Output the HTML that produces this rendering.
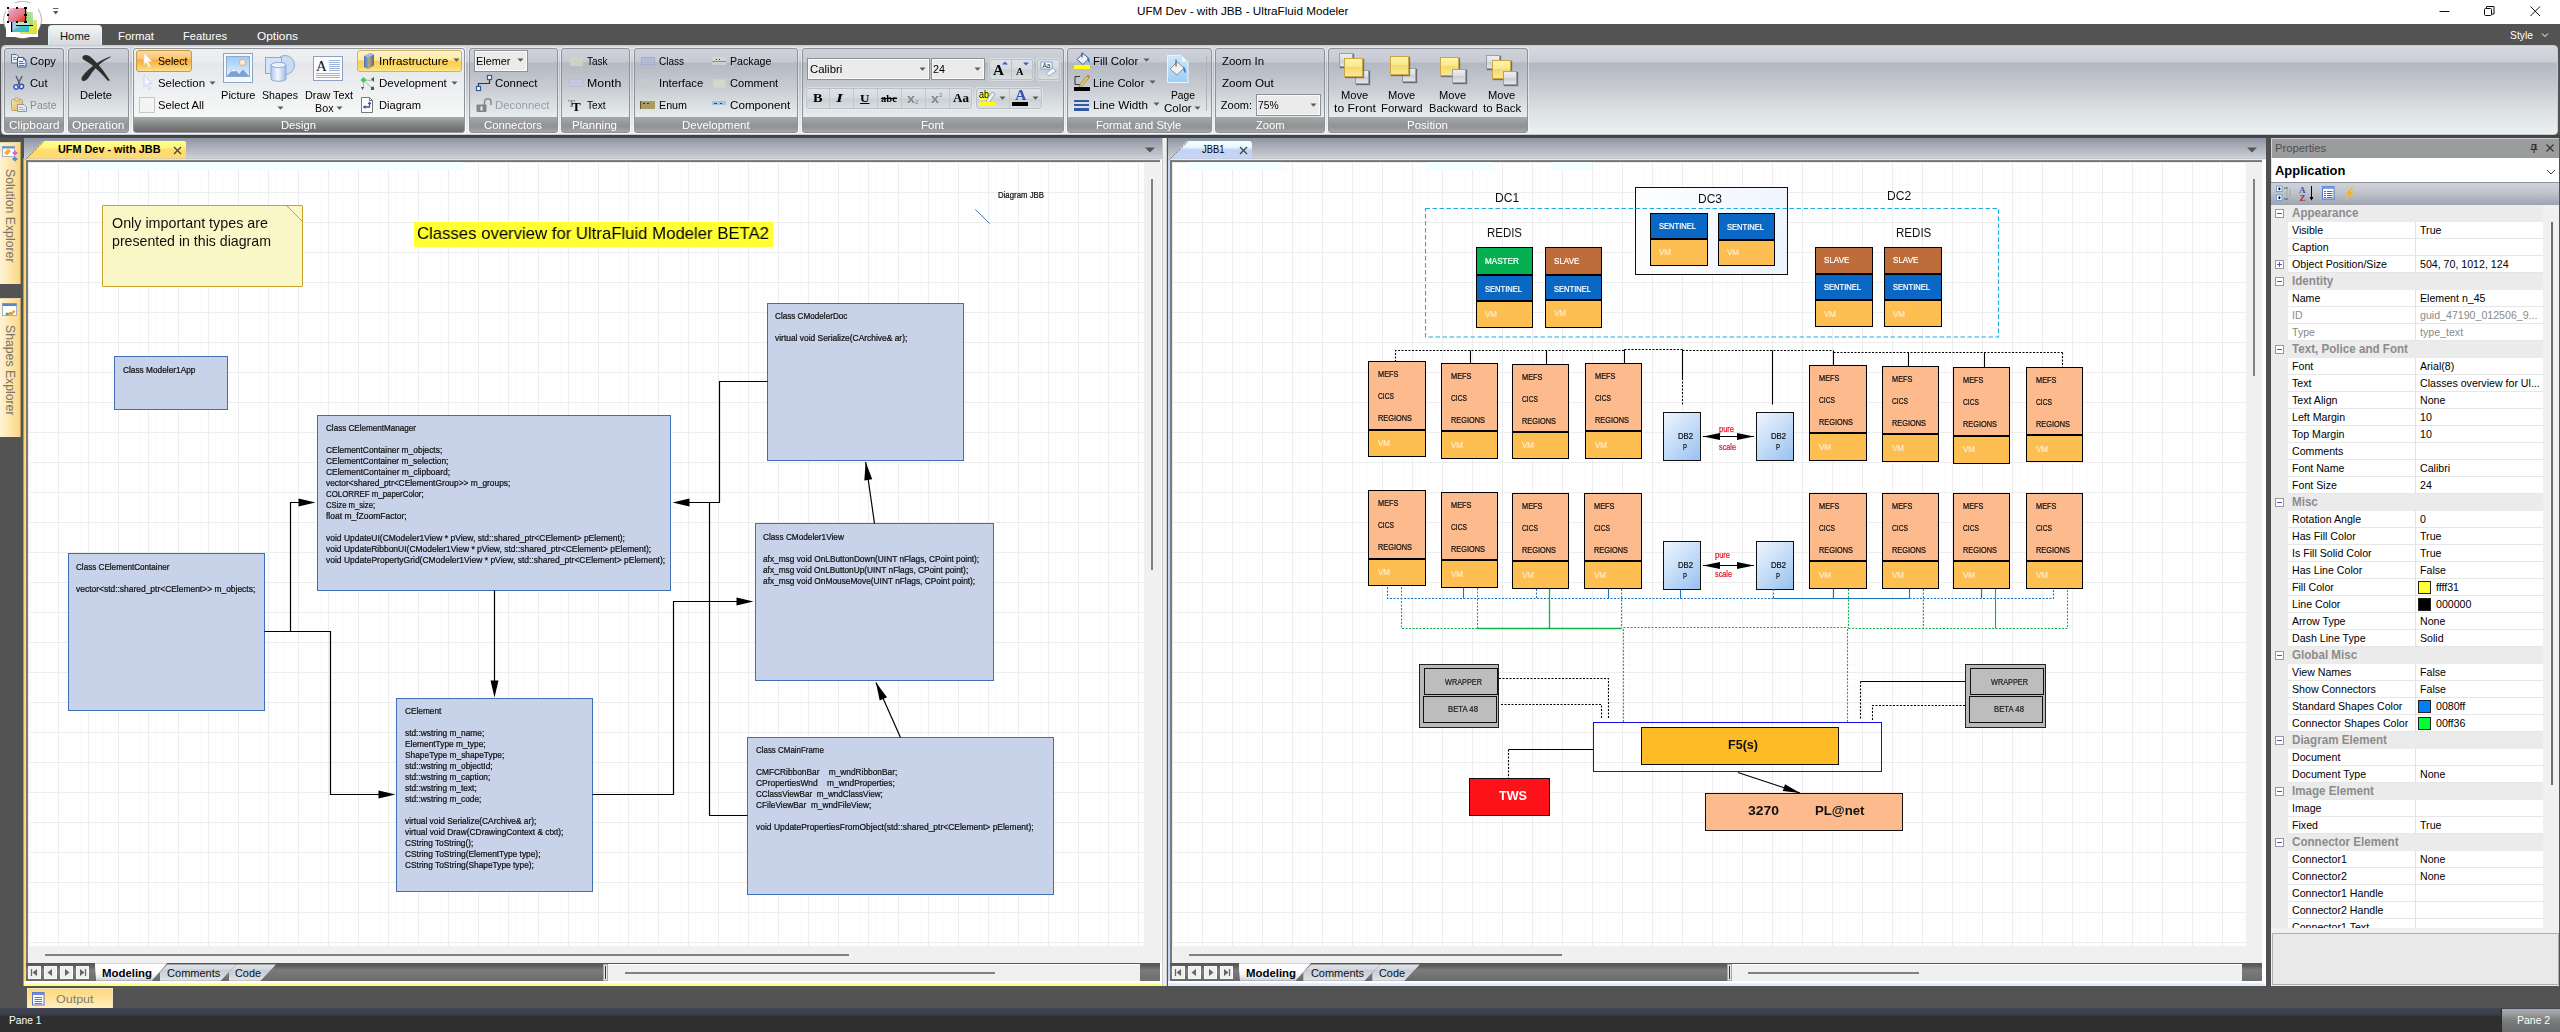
<!DOCTYPE html>
<html lang="en"><head><meta charset="utf-8"><title>UFM Dev - with JBB - UltraFluid Modeler</title>
<style>
html,body{margin:0;padding:0;}
body{width:2560px;height:1032px;overflow:hidden;background:#535353;position:relative;font-family:"Liberation Sans",sans-serif;font-size:12px;color:#000;}
div,span.t,svg{position:absolute;box-sizing:border-box;}
span.t{white-space:pre;line-height:1;transform-origin:0 50%;}
.grp{border:1px solid #90929a;border-radius:3px;background:linear-gradient(#cfd2da 0,#c6cad2 13px,#b3b8c2 14px,#c9cdd3 40px,#e6ecec 67px,#e6ecec 68px,#a6a8a9 68px,#8f9192 77px,#a7a9a9 84px);box-shadow:0 0 0 1px rgba(255,255,255,.45);}
.grph{border:1px solid #90929a;border-radius:3px;background:linear-gradient(#eeeff1 0,#ebecee 13px,#e6e7ea 14px,#eeeff1 40px,#f6f7f7 67px,#f6f7f7 68px,#a9aaaa 68px,#7d7e7e 77px,#696969 84px);box-shadow:0 0 0 1px rgba(255,255,255,.7);}
.gl{color:#fff;}
</style></head>
<body>
<div style="left:0px;top:138px;width:24px;height:848px;background:#535353;"></div>
<div style="left:23px;top:158px;width:0.7px;height:828px;background:#9a9a9a;"></div>
<div style="left:0px;top:142px;width:21px;height:141.5px;background:linear-gradient(to right,#fff3d6 0,#fee9b4 8px,#fcdc90 17px,#f8d277 21px);border-top:1px solid #e9d9a8;border-right:1px solid #b9a060;"></div>
<div style="left:0px;top:298px;width:21px;height:139px;background:linear-gradient(to right,#fff3d6 0,#fee9b4 8px,#fcdc90 17px,#f8d277 21px);border-top:1px solid #e9d9a8;border-right:1px solid #b9a060;"></div>
<svg style="left:2px;top:146px" width="17" height="17" viewBox="0 0 17 17"><rect x=".5" y=".5" width="12" height="10" fill="#fff" stroke="#8aa0c8" stroke-width=".8"/><rect x=".5" y=".5" width="12" height="2" fill="#6a8fd0"/><path d="M2 7l4-4.500 3 2.500-4 4.500z" fill="#f4b030"/><path d="M10 7l3-2.500 3 2.500-3 2.500z" fill="#e060d8"/><path d="M10 13l3-2.500 3 2.500-3 2.500z" fill="#4a90e0"/></svg>
<svg style="left:2px;top:303px" width="17" height="17" viewBox="0 0 17 17"><rect x=".5" y=".5" width="14" height="12" fill="#fff" stroke="#8aa0c8" stroke-width=".8"/><rect x=".5" y=".5" width="14" height="2.500" fill="#5a80c8"/><path d="M4 12l4-3 2 2z" fill="#e05030"/><path d="M7 11l5-4 1.500 1.500-4 4z" fill="#f0a020"/><circle cx="5" cy="11" r="1.500" fill="#50b040"/></svg>
<span class="t" style="left:3.5px;top:169px;writing-mode:vertical-rl;color:#79736b;font-size:13px;line-height:1;white-space:pre;transform:scaleY(0.9445);transform-origin:0 0;">Solution Explorer</span>
<span class="t" style="left:3.5px;top:325px;writing-mode:vertical-rl;color:#79736b;font-size:13px;line-height:1;white-space:pre;transform:scaleY(0.9416);transform-origin:0 0;">Shapes Explorer</span>
<div style="left:23.7px;top:138px;width:1138.6px;height:21px;background:linear-gradient(#8d94a1 0,#a2a7b2 6px,#bfc2ca 16px,#cfd1d6 20px,#b9bbc2 21px);"></div>
<div style="left:23.7px;top:159px;width:1138.6px;height:826.5px;background:#fff;"></div>
<div style="left:23.7px;top:159px;width:1137.1px;height:1px;background:#ffe878;"></div>
<div style="left:23.7px;top:159px;width:2.6px;height:826.5px;background:#ffd970;"></div>
<div style="left:23.7px;top:981px;width:1137.6px;height:4.6px;background:linear-gradient(#ffffff 0,#ffffff 40%,#ffff7a 55%,#ffff8a 100%);"></div>
<div style="left:23.7px;top:985.5px;width:1138.6px;height:0.8px;background:#8a8a8a;"></div>
<div style="left:24.7px;top:140.7px;width:161.8px;height:19.6px;background:linear-gradient(#ffff8c 0,#fff780 6px,#ffdc70 9px,#ffd970 18px);clip-path:polygon(19px 0,calc(100% - 2px) 0,100% 2px,100% 17.8px,0 17.8px,0 100%,1.5px 100%,1.5px 17.8px);"></div>
<svg style="left:24.7px;top:140.7px" width="20" height="19" viewBox="0 0 20 19"><path d="M.5 18.500L19 .5" stroke="#555" stroke-width="1" stroke-dasharray="1.200 1" fill="none"/></svg>
<span class="t" style="left:58.3px;top:144px;font-size:11px;font-weight:bold;transform:scaleX(0.9866);">UFM Dev - with JBB</span>
<svg style="left:173px;top:146px" width="9" height="9" viewBox="0 0 9 9"><path d="M1 1l7 7M8 1l-7 7" stroke="#444" stroke-width="1.300"/></svg>
<svg style="left:1144.8px;top:146.5px" width="10" height="6" viewBox="0 0 10 6"><path d="M0 .5h10L5 5.500z" fill="#555"/></svg>
<div style="left:26.3px;top:160px;width:1134.2px;height:2px;background:linear-gradient(#8c8c8c,#696969);"></div>
<div style="left:26.3px;top:160.2px;width:1.7px;height:821px;background:#7a7a7a;"></div>
<div style="left:28px;top:162px;width:1116px;height:784px;background-color:#fff;background-image:linear-gradient(to right,#ededed 1px,transparent 1px),linear-gradient(to bottom,#ededed 1px,transparent 1px),linear-gradient(to right,#fbfbfb 1px,transparent 1px),linear-gradient(to bottom,#fbfbfb 1px,transparent 1px),linear-gradient(to right,#fbfbfb 1px,transparent 1px),linear-gradient(to bottom,#fbfbfb 1px,transparent 1px),linear-gradient(to right,#fbfbfb 1px,transparent 1px),linear-gradient(to bottom,#fbfbfb 1px,transparent 1px);background-size:30px 30px;background-position:0 0,0 0,7px 0,0 7px,15px 0,0 15px,22px 0,0 22px;"></div>
<div style="left:1144px;top:162px;width:16.5px;height:801px;background:#f0f0f0;"></div>
<div style="left:28px;top:946px;width:1117px;height:17.2px;background:#f0f0f0;"></div>
<div style="left:26.3px;top:963.2px;width:1134.2px;height:17.8px;background:linear-gradient(#555 0,#5e5e5e 3px,#7b7b7b 7px,#747474 12px,#6a6a6a 18px);"></div>
<div style="left:28.2px;top:966px;width:13px;height:13px;background:#efefef;border:1px solid #f8f8f8;"></div>
<svg style="left:28.2px;top:966px" width="13" height="13" viewBox="0 0 13 13"><path d="M3.500 3v7" stroke="#666" stroke-width="1.200"/><path d="M9 3v7L4.500 6.500z" fill="#666"/></svg>
<div style="left:44.2px;top:966px;width:13px;height:13px;background:#efefef;border:1px solid #f8f8f8;"></div>
<svg style="left:44.2px;top:966px" width="13" height="13" viewBox="0 0 13 13"><path d="M8 3v7L3.500 6.500z" fill="#666"/></svg>
<div style="left:60.2px;top:966px;width:13px;height:13px;background:#efefef;border:1px solid #f8f8f8;"></div>
<svg style="left:60.2px;top:966px" width="13" height="13" viewBox="0 0 13 13"><path d="M5 3v7l4.500-3.500z" fill="#666"/></svg>
<div style="left:76.2px;top:966px;width:13px;height:13px;background:#efefef;border:1px solid #f8f8f8;"></div>
<svg style="left:76.2px;top:966px" width="13" height="13" viewBox="0 0 13 13"><path d="M9.500 3v7" stroke="#666" stroke-width="1.200"/><path d="M4 3v7l4.500-3.500z" fill="#666"/></svg>
<div style="left:94.7px;top:963.2px;width:72.6px;height:17.5px;background:linear-gradient(#fff 0,#fdfdfd 10px,#e6e9ee 14px,#c9d0da 17.5px);clip-path:polygon(0 0,100% 0,calc(100% - 15.5px) 100%,1.5px 100%);"></div>
<div style="left:159.5px;top:963.2px;width:76.7px;height:17.5px;background:linear-gradient(#e4e8ee 0,#d6dbe3 6px,#c9ced6 7px,#d0d5dc 12px,#e0e4e9 17px);clip-path:polygon(7.8px 1.2px,100% 1.2px,calc(100% - 15.5px) 100%,0 100%,0 9.5px);"></div>
<div style="left:228.5px;top:963.2px;width:47.5px;height:17.5px;background:linear-gradient(#e4e8ee 0,#d6dbe3 6px,#c9ced6 7px,#d0d5dc 12px,#e0e4e9 17px);clip-path:polygon(7.8px 1.2px,100% 1.2px,calc(100% - 15.5px) 100%,0 100%,0 9.5px);"></div>
<span class="t" style="left:102.49px;top:968px;font-size:11px;font-weight:bold;transform:scaleX(1.0358);">Modeling</span>
<span class="t" style="left:167.1px;top:968px;font-size:11px;color:#111;">Comments</span>
<span class="t" style="left:235.1px;top:968px;font-size:11px;color:#111;transform:scaleX(0.9887);">Code</span>
<div style="left:1162.3px;top:138px;width:5.2px;height:848px;background:linear-gradient(to right,#a8a8a8 0,#ececec 1px,#efefef 4px,#a0a0a0 5.200px);"></div>
<div style="left:1167.5px;top:138px;width:1098.8px;height:21px;background:linear-gradient(#8d94a1 0,#a2a7b2 6px,#bfc2ca 16px,#cfd1d6 20px,#b9bbc2 21px);"></div>
<div style="left:1167.5px;top:159px;width:1098.8px;height:826.5px;background:#fff;"></div>
<div style="left:1167.5px;top:159px;width:1097.3px;height:1px;background:#e3ecfd;"></div>
<div style="left:1167.5px;top:159px;width:2.6px;height:826.5px;background:#c5d6f6;"></div>
<div style="left:1167.5px;top:981px;width:1097.8px;height:4.6px;background:linear-gradient(#ffffff 0,#ffffff 40%,#dbe6fc 55%,#e6eefe 100%);"></div>
<div style="left:1167.5px;top:985.5px;width:1098.8px;height:0.8px;background:#8a8a8a;"></div>
<div style="left:1168.5px;top:140.7px;width:83.5px;height:19.6px;background:linear-gradient(#f2ffff 0,#eaf8ff 6px,#c2d2f2 9px,#c5d6f6 18px);clip-path:polygon(19px 0,calc(100% - 2px) 0,100% 2px,100% 17.8px,0 17.8px,0 100%,1.5px 100%,1.5px 17.8px);"></div>
<svg style="left:1168.5px;top:140.7px" width="20" height="19" viewBox="0 0 20 19"><path d="M.5 18.500L19 .5" stroke="#555" stroke-width="1" stroke-dasharray="1.200 1" fill="none"/></svg>
<span class="t" style="left:1202.13px;top:144px;font-size:11px;transform:scaleX(0.8558);">JBB1</span>
<svg style="left:1238.5px;top:146px" width="9" height="9" viewBox="0 0 9 9"><path d="M1 1l7 7M8 1l-7 7" stroke="#444" stroke-width="1.300"/></svg>
<svg style="left:2246.6px;top:146.5px" width="10" height="6" viewBox="0 0 10 6"><path d="M0 .5h10L5 5.500z" fill="#555"/></svg>
<div style="left:1170.1px;top:160px;width:1092.2px;height:2px;background:linear-gradient(#8c8c8c,#696969);"></div>
<div style="left:1170.1px;top:160.2px;width:1.7px;height:821px;background:#7a7a7a;"></div>
<div style="left:1171.8px;top:162px;width:1074px;height:784px;background-color:#fff;background-image:linear-gradient(to right,#ededed 1px,transparent 1px),linear-gradient(to bottom,#ededed 1px,transparent 1px),linear-gradient(to right,#fbfbfb 1px,transparent 1px),linear-gradient(to bottom,#fbfbfb 1px,transparent 1px),linear-gradient(to right,#fbfbfb 1px,transparent 1px),linear-gradient(to bottom,#fbfbfb 1px,transparent 1px),linear-gradient(to right,#fbfbfb 1px,transparent 1px),linear-gradient(to bottom,#fbfbfb 1px,transparent 1px);background-size:30px 30px;background-position:0 0,0 0,7px 0,0 7px,15px 0,0 15px,22px 0,0 22px;"></div>
<div style="left:2245.8px;top:162px;width:16.5px;height:801px;background:#f0f0f0;"></div>
<div style="left:1171.8px;top:946px;width:1075px;height:17.2px;background:#f0f0f0;"></div>
<div style="left:1170.1px;top:963.2px;width:1092.2px;height:17.8px;background:linear-gradient(#555 0,#5e5e5e 3px,#7b7b7b 7px,#747474 12px,#6a6a6a 18px);"></div>
<div style="left:1172px;top:966px;width:13px;height:13px;background:#efefef;border:1px solid #f8f8f8;"></div>
<svg style="left:1172px;top:966px" width="13" height="13" viewBox="0 0 13 13"><path d="M3.500 3v7" stroke="#666" stroke-width="1.200"/><path d="M9 3v7L4.500 6.500z" fill="#666"/></svg>
<div style="left:1188px;top:966px;width:13px;height:13px;background:#efefef;border:1px solid #f8f8f8;"></div>
<svg style="left:1188px;top:966px" width="13" height="13" viewBox="0 0 13 13"><path d="M8 3v7L3.500 6.500z" fill="#666"/></svg>
<div style="left:1204px;top:966px;width:13px;height:13px;background:#efefef;border:1px solid #f8f8f8;"></div>
<svg style="left:1204px;top:966px" width="13" height="13" viewBox="0 0 13 13"><path d="M5 3v7l4.500-3.500z" fill="#666"/></svg>
<div style="left:1220px;top:966px;width:13px;height:13px;background:#efefef;border:1px solid #f8f8f8;"></div>
<svg style="left:1220px;top:966px" width="13" height="13" viewBox="0 0 13 13"><path d="M9.500 3v7" stroke="#666" stroke-width="1.200"/><path d="M4 3v7l4.500-3.500z" fill="#666"/></svg>
<div style="left:1238.5px;top:963.2px;width:72.6px;height:17.5px;background:linear-gradient(#fff 0,#fdfdfd 10px,#e6e9ee 14px,#c9d0da 17.5px);clip-path:polygon(0 0,100% 0,calc(100% - 15.5px) 100%,1.5px 100%);"></div>
<div style="left:1303.3px;top:963.2px;width:76.7px;height:17.5px;background:linear-gradient(#e4e8ee 0,#d6dbe3 6px,#c9ced6 7px,#d0d5dc 12px,#e0e4e9 17px);clip-path:polygon(7.8px 1.2px,100% 1.2px,calc(100% - 15.5px) 100%,0 100%,0 9.5px);"></div>
<div style="left:1372.3px;top:963.2px;width:47.5px;height:17.5px;background:linear-gradient(#e4e8ee 0,#d6dbe3 6px,#c9ced6 7px,#d0d5dc 12px,#e0e4e9 17px);clip-path:polygon(7.8px 1.2px,100% 1.2px,calc(100% - 15.5px) 100%,0 100%,0 9.5px);"></div>
<span class="t" style="left:1246.29px;top:968px;font-size:11px;font-weight:bold;transform:scaleX(1.0358);">Modeling</span>
<span class="t" style="left:1310.9px;top:968px;font-size:11px;color:#111;">Comments</span>
<span class="t" style="left:1378.9px;top:968px;font-size:11px;color:#111;transform:scaleX(0.9887);">Code</span>
<div style="left:2266.3px;top:138px;width:4.7px;height:848px;background:#505050;"></div>
<div style="left:1151px;top:179px;width:2px;height:391px;background:#808080;"></div>
<div style="left:45px;top:954px;width:804px;height:2px;background:#808080;"></div>
<div style="left:603px;top:963.8px;width:4.8px;height:17.2px;background:#e8e8e8;border:1px solid #a9a9a9;"></div>
<div style="left:604.5px;top:966px;width:1px;height:13px;background:#333;"></div>
<div style="left:607.8px;top:963.6px;width:532.5px;height:17.4px;background:#f0f0f0;border-top:1px solid #fff;"></div>
<div style="left:625px;top:972px;width:370px;height:2px;background:#808080;"></div>
<div style="left:1140.3px;top:963.3px;width:19.8px;height:17.7px;background:linear-gradient(#555 0,#5e5e5e 3px,#7b7b7b 7px,#747474 12px,#6e6e6e 18px);"></div>
<div style="left:2253px;top:179px;width:2px;height:197px;background:#808080;"></div>
<div style="left:1189px;top:954px;width:373px;height:2px;background:#808080;"></div>
<div style="left:1727px;top:963.8px;width:4.8px;height:17.2px;background:#e8e8e8;border:1px solid #a9a9a9;"></div>
<div style="left:1728.5px;top:966px;width:1px;height:13px;background:#333;"></div>
<div style="left:1731.8px;top:963.6px;width:510.5px;height:17.4px;background:#f0f0f0;border-top:1px solid #fff;"></div>
<div style="left:1748px;top:972px;width:171px;height:2px;background:#808080;"></div>
<div style="left:2242.2px;top:963.3px;width:19.8px;height:17.7px;background:linear-gradient(#555 0,#5e5e5e 3px,#7b7b7b 7px,#747474 12px,#6e6e6e 18px);"></div>
<div style="left:81px;top:162px;width:381px;height:7.5px;background:#f0ffff;"></div>
<div style="left:1189px;top:162px;width:93px;height:7.5px;background:#f0ffff;"></div>
<div style="left:1427px;top:162px;width:66px;height:7.5px;background:#f0ffff;"></div>
<div style="left:1553px;top:162px;width:39px;height:7.5px;background:#f0ffff;"></div>
<div style="left:0px;top:986px;width:2560px;height:22px;background:#535353;"></div>
<div style="left:27px;top:988px;width:86px;height:20px;background:linear-gradient(#ffd67a 0,#ffe49c 10px,#fff0c4 20px);border:1px solid #f0e4c0;border-bottom:none;"></div>
<svg style="left:32px;top:992px" width="13" height="14" viewBox="0 0 13 14"><rect x=".5" y=".5" width="11.500" height="12.500" fill="#fff" stroke="#5a6fc8"/><rect x=".5" y=".5" width="11.500" height="2.500" fill="#6a8ae0"/><path d="M2.500 5.500h7.500M2.500 7.500h7.500M2.500 9.500h7.500M2.500 11.500h7.500" stroke="#777" stroke-width="1"/></svg>
<span class="t" style="left:56.27px;top:994px;font-size:11px;color:#7d7d7d;transform:scaleX(1.1356);">Output</span>
<div style="left:0px;top:1008px;width:2560px;height:24px;background:linear-gradient(#424554 0,#3b3f4b 6px,#333437 8px,#2f2f2f 9px,#2f2f2f 100%);"></div>
<span class="t" style="left:9.31px;top:1015px;font-size:11px;color:#fff;transform:scaleX(0.9322);">Pane 1</span>
<div style="left:2500.5px;top:1008.7px;width:59.5px;height:23.3px;background:linear-gradient(#a8aaab 0,#9a9c9d 5px,#7c7e80 11px,#727476 16px,#6a6c6e 23px);border-left:1px solid #2a2a2a;"></div>
<span class="t" style="left:2517.11px;top:1015px;font-size:11px;color:#fff;transform:scaleX(0.9523);">Pane 2</span>
<div style="left:0;top:0;width:2270px;height:1032px;will-change:transform;">
<div style="left:102px;top:205px;width:201px;height:82px;background:#fbf6c6;border:1px solid #c9a22e;border-radius:1px;"></div>
<svg style="left:286px;top:205px" width="17" height="17" viewBox="0 0 17 17"><path d="M.5 .5L16.500 16.500" stroke="#c9a22e" stroke-width="1" fill="none"/></svg>
<span class="t" style="left:111.8px;top:216px;font-size:14.5px;color:#111;transform:scaleX(0.9876);">Only important types are</span>
<span class="t" style="left:111.8px;top:234px;font-size:14.5px;color:#111;transform:scaleX(0.9766);">presented in this diagram</span>
<div style="left:414px;top:222px;width:359px;height:25px;background:#ffff31;"></div>
<span class="t" style="left:416.5px;top:225px;font-size:17px;color:#000;transform:scaleX(0.9839);">Classes overview for UltraFluid Modeler BETA2</span>
<span class="t" style="left:998px;top:192px;font-size:8.2px;color:#111;transform:scaleX(0.9523);-webkit-text-stroke:0.22px #111;">Diagram JBB</span>
<div style="left:114px;top:356px;width:114px;height:54px;background:#c8d2e9;border:1px solid #3f6fb5;"></div>
<span class="t" style="left:123.1px;top:367px;font-size:8.2px;color:#111;transform:scaleX(1.0132);-webkit-text-stroke:0.22px #111;">Class Modeler1App</span>
<div style="left:317px;top:415px;width:354px;height:176px;background:#c8d2e9;border:1px solid #3f6fb5;"></div>
<span class="t" style="left:326.4px;top:425px;font-size:8.2px;color:#111;transform:scaleX(0.9885);-webkit-text-stroke:0.22px #111;">Class CElementManager</span>
<span class="t" style="left:326.4px;top:447px;font-size:8.2px;color:#111;transform:scaleX(1.0257);-webkit-text-stroke:0.22px #111;">CElementContainer m_objects;</span>
<span class="t" style="left:326.4px;top:458px;font-size:8.2px;color:#111;transform:scaleX(1.0228);-webkit-text-stroke:0.22px #111;">CElementContainer m_selection;</span>
<span class="t" style="left:326.4px;top:469px;font-size:8.2px;color:#111;transform:scaleX(1.0283);-webkit-text-stroke:0.22px #111;">CElementContainer m_clipboard;</span>
<span class="t" style="left:326.4px;top:480px;font-size:8.2px;color:#111;transform:scaleX(1.0227);-webkit-text-stroke:0.22px #111;">vector&lt;shared_ptr&lt;CElementGroup&gt;&gt; m_groups;</span>
<span class="t" style="left:326.4px;top:491px;font-size:8.2px;color:#111;transform:scaleX(0.9581);-webkit-text-stroke:0.22px #111;">COLORREF m_paperColor;</span>
<span class="t" style="left:326.4px;top:502px;font-size:8.2px;color:#111;transform:scaleX(0.9370);-webkit-text-stroke:0.22px #111;">CSize m_size;</span>
<span class="t" style="left:326.4px;top:513px;font-size:8.2px;color:#111;transform:scaleX(1.0369);-webkit-text-stroke:0.22px #111;">float m_fZoomFactor;</span>
<span class="t" style="left:326.4px;top:535px;font-size:8.2px;color:#111;transform:scaleX(1.0372);-webkit-text-stroke:0.22px #111;">void UpdateUI(CModeler1View * pView, std::shared_ptr&lt;CElement&gt; pElement);</span>
<span class="t" style="left:326.4px;top:546px;font-size:8.2px;color:#111;transform:scaleX(1.0351);-webkit-text-stroke:0.22px #111;">void UpdateRibbonUI(CModeler1View * pView, std::shared_ptr&lt;CElement&gt; pElement);</span>
<span class="t" style="left:326.4px;top:557px;font-size:8.2px;color:#111;transform:scaleX(1.0390);-webkit-text-stroke:0.22px #111;">void UpdatePropertyGrid(CModeler1View * pView, std::shared_ptr&lt;CElement&gt; pElement);</span>
<div style="left:68px;top:553px;width:197px;height:158px;background:#c8d2e9;border:1px solid #3f6fb5;"></div>
<span class="t" style="left:76.4px;top:564px;font-size:8.2px;color:#111;transform:scaleX(0.9911);-webkit-text-stroke:0.22px #111;">Class CElementContainer</span>
<span class="t" style="left:76.4px;top:586px;font-size:8.2px;color:#111;transform:scaleX(1.0309);-webkit-text-stroke:0.22px #111;">vector&lt;std::shared_ptr&lt;CElement&gt;&gt; m_objects;</span>
<div style="left:396px;top:698px;width:197px;height:194px;background:#c8d2e9;border:1px solid #3f6fb5;"></div>
<span class="t" style="left:405.1px;top:708px;font-size:8.2px;color:#111;transform:scaleX(1.0105);-webkit-text-stroke:0.22px #111;">CElement</span>
<span class="t" style="left:405.1px;top:730px;font-size:8.2px;color:#111;transform:scaleX(1.0180);-webkit-text-stroke:0.22px #111;">std::wstring m_name;</span>
<span class="t" style="left:405.1px;top:741px;font-size:8.2px;color:#111;transform:scaleX(1.0181);-webkit-text-stroke:0.22px #111;">ElementType m_type;</span>
<span class="t" style="left:405.1px;top:752px;font-size:8.2px;color:#111;transform:scaleX(1.0193);-webkit-text-stroke:0.22px #111;">ShapeType m_shapeType;</span>
<span class="t" style="left:405.1px;top:763px;font-size:8.2px;color:#111;transform:scaleX(1.0186);-webkit-text-stroke:0.22px #111;">std::wstring m_objectId;</span>
<span class="t" style="left:405.1px;top:774px;font-size:8.2px;color:#111;transform:scaleX(1.0184);-webkit-text-stroke:0.22px #111;">std::wstring m_caption;</span>
<span class="t" style="left:405.1px;top:785px;font-size:8.2px;color:#111;transform:scaleX(1.0173);-webkit-text-stroke:0.22px #111;">std::wstring m_text;</span>
<span class="t" style="left:405.1px;top:796px;font-size:8.2px;color:#111;transform:scaleX(1.0177);-webkit-text-stroke:0.22px #111;">std::wstring m_code;</span>
<span class="t" style="left:405.1px;top:818px;font-size:8.2px;color:#111;transform:scaleX(1.0205);-webkit-text-stroke:0.22px #111;">virtual void Serialize(CArchive&amp; ar);</span>
<span class="t" style="left:405.1px;top:829px;font-size:8.2px;color:#111;transform:scaleX(1.0212);-webkit-text-stroke:0.22px #111;">virtual void Draw(CDrawingContext &amp; ctxt);</span>
<span class="t" style="left:405.1px;top:840px;font-size:8.2px;color:#111;transform:scaleX(1.0170);-webkit-text-stroke:0.22px #111;">CString ToString();</span>
<span class="t" style="left:405.1px;top:851px;font-size:8.2px;color:#111;transform:scaleX(1.0206);-webkit-text-stroke:0.22px #111;">CString ToString(ElementType type);</span>
<span class="t" style="left:405.1px;top:862px;font-size:8.2px;color:#111;transform:scaleX(1.0204);-webkit-text-stroke:0.22px #111;">CString ToString(ShapeType type);</span>
<div style="left:767px;top:303px;width:197px;height:158px;background:#c8d2e9;border:1px solid #3f6fb5;"></div>
<span class="t" style="left:775.3px;top:313px;font-size:8.2px;color:#111;transform:scaleX(0.9944);-webkit-text-stroke:0.22px #111;">Class CModelerDoc</span>
<span class="t" style="left:775.3px;top:335px;font-size:8.2px;color:#111;transform:scaleX(1.0274);-webkit-text-stroke:0.22px #111;">virtual void Serialize(CArchive&amp; ar);</span>
<div style="left:755px;top:523px;width:239px;height:158px;background:#c8d2e9;border:1px solid #3f6fb5;"></div>
<span class="t" style="left:763.4px;top:534px;font-size:8.2px;color:#111;transform:scaleX(1.0060);-webkit-text-stroke:0.22px #111;">Class CModeler1View</span>
<span class="t" style="left:763.4px;top:556px;font-size:8.2px;color:#111;transform:scaleX(1.0136);-webkit-text-stroke:0.22px #111;">afx_msg void OnLButtonDown(UINT nFlags, CPoint point);</span>
<span class="t" style="left:763.4px;top:567px;font-size:8.2px;color:#111;transform:scaleX(1.0117);-webkit-text-stroke:0.22px #111;">afx_msg void OnLButtonUp(UINT nFlags, CPoint point);</span>
<span class="t" style="left:763.4px;top:578px;font-size:8.2px;color:#111;transform:scaleX(1.0166);-webkit-text-stroke:0.22px #111;">afx_msg void OnMouseMove(UINT nFlags, CPoint point);</span>
<div style="left:747px;top:737px;width:307px;height:158px;background:#c8d2e9;border:1px solid #3f6fb5;"></div>
<span class="t" style="left:756.1px;top:747px;font-size:8.2px;color:#111;transform:scaleX(0.9691);-webkit-text-stroke:0.22px #111;">Class CMainFrame</span>
<span class="t" style="left:756.1px;top:769px;font-size:8.2px;color:#111;transform:scaleX(1.0180);-webkit-text-stroke:0.22px #111;">CMFCRibbonBar    m_wndRibbonBar;</span>
<span class="t" style="left:756.1px;top:780px;font-size:8.2px;color:#111;transform:scaleX(1.0269);-webkit-text-stroke:0.22px #111;">CPropertiesWnd    m_wndProperties;</span>
<span class="t" style="left:756.1px;top:791px;font-size:8.2px;color:#111;transform:scaleX(0.9906);-webkit-text-stroke:0.22px #111;">CClassViewBar  m_wndClassView;</span>
<span class="t" style="left:756.1px;top:802px;font-size:8.2px;color:#111;transform:scaleX(1.0165);-webkit-text-stroke:0.22px #111;">CFileViewBar  m_wndFileView;</span>
<span class="t" style="left:756.1px;top:824px;font-size:8.2px;color:#111;transform:scaleX(1.0338);-webkit-text-stroke:0.22px #111;">void UpdatePropertiesFromObject(std::shared_ptr&lt;CElement&gt; pElement);</span>
<svg style="left:28px;top:162px" width="1116" height="783" viewBox="0 0 1116 783"><polyline points="236.5,469.5 302.5,469.5 302.5,632.5 352.0,632.5" fill="none" stroke="#000" stroke-width="1.200" /><polygon points="367.5,632.5 350.5,636.5 350.5,628.5" fill="#000"/><polyline points="262.5,469.5 262.5,340.5 272.0,340.5" fill="none" stroke="#000" stroke-width="1.200" /><polygon points="287.5,340.5 270.5,344.5 270.5,336.5" fill="#000"/><polyline points="466.5,428.5 466.5,520.0" fill="none" stroke="#000" stroke-width="1.200" /><polygon points="466.5,535.5 462.5,518.5 470.5,518.5" fill="#000"/><polyline points="564.5,632.5 645.5,632.5 645.5,439.5 710.0,439.5" fill="none" stroke="#000" stroke-width="1.200" /><polygon points="725.5,439.5 708.5,443.5 708.5,435.5" fill="#000"/><polyline points="739.5,219.5 691.5,219.5 691.5,340.5 660.0,340.5" fill="none" stroke="#000" stroke-width="1.200" /><polygon points="644.5,340.5 661.5,336.5 661.5,344.5" fill="#000"/><polyline points="719.5,653.5 681.5,653.5 681.5,340.5" fill="none" stroke="#000" stroke-width="1.200" /><polyline points="846.5,361.5 837.7,300.0" fill="none" stroke="#000" stroke-width="1.200" /><polygon points="837.7,300.0 844.2,317.3 836.3,318.4" fill="#000"/><polyline points="872.5,575.5 848.0,520.5" fill="none" stroke="#000" stroke-width="1.200" /><polygon points="848.0,520.5 859.0,535.3 851.7,538.6" fill="#000"/><path d="M947.2 47.400000000000006L961.8 61.599999999999994" stroke="#4a7ab5" stroke-width="1"/></svg>
<div style="left:1635px;top:187px;width:153px;height:88px;background:linear-gradient(100deg,#fdfeff 0,#f4f8fe 60%,#eef4fd 100%);border:1px solid #111;"></div>
<svg style="left:1172px;top:162px" width="1075" height="783" viewBox="0 0 1075 783"><rect x="253.5" y="46.5" width="573" height="128.500" fill="none" stroke="#1cade4" stroke-width="1.100" stroke-dasharray="4.500 2.500"/></svg>
<span class="t" style="left:1495px;top:192px;font-size:12.5px;color:#111;transform:scaleX(0.9678);">DC1</span>
<span class="t" style="left:1887.1px;top:190px;font-size:12.5px;color:#111;transform:scaleX(0.9678);">DC2</span>
<span class="t" style="left:1487.3px;top:227px;font-size:12.5px;color:#111;transform:scaleX(0.9162);">REDIS</span>
<span class="t" style="left:1895.5px;top:227px;font-size:12.5px;color:#111;transform:scaleX(0.9240);">REDIS</span>
<div style="left:1476px;top:247px;width:57px;height:29px;background:#05b050;border:1.3px solid #000;"></div>
<div style="left:1476px;top:274px;width:57px;height:28px;background:#0a68c4;border:1.3px solid #000;border-top-width:2px;"></div>
<div style="left:1476px;top:300px;width:57px;height:28px;background:#fdbf52;border:1.3px solid #000;border-top-width:2px;"></div>
<span class="t" style="left:1485px;top:258px;font-size:8.2px;color:#fff;transform:scaleX(0.9902);-webkit-text-stroke:0.22px #fff;">MASTER</span>
<span class="t" style="left:1485px;top:286px;font-size:8.2px;color:#fff;transform:scaleX(0.9227);-webkit-text-stroke:0.22px #fff;">SENTINEL</span>
<span class="t" style="left:1485px;top:311px;font-size:8.2px;color:#fde9c8;transform:scaleX(0.9756);-webkit-text-stroke:0.22px #fde9c8;">VM</span>
<div style="left:1545px;top:247px;width:57px;height:29px;background:#bd6d3a;border:1.3px solid #000;"></div>
<div style="left:1545px;top:274px;width:57px;height:27px;background:#0a68c4;border:1.3px solid #000;border-top-width:2px;"></div>
<div style="left:1545px;top:299px;width:57px;height:29px;background:#fdbf52;border:1.3px solid #000;border-top-width:2px;"></div>
<span class="t" style="left:1554px;top:258px;font-size:8.2px;color:#fff;transform:scaleX(0.9855);-webkit-text-stroke:0.22px #fff;">SLAVE</span>
<span class="t" style="left:1554px;top:286px;font-size:8.2px;color:#fff;transform:scaleX(0.9227);-webkit-text-stroke:0.22px #fff;">SENTINEL</span>
<span class="t" style="left:1554px;top:310px;font-size:8.2px;color:#fde9c8;transform:scaleX(0.9756);-webkit-text-stroke:0.22px #fde9c8;">VM</span>
<span class="t" style="left:1697.5px;top:193px;font-size:12.5px;color:#111;transform:scaleX(0.9598);">DC3</span>
<div style="left:1650px;top:212.5px;width:58px;height:27px;background:#0a68c4;border:1.3px solid #000;"></div>
<div style="left:1650px;top:237.5px;width:58px;height:28.5px;background:#fdbf52;border:1.3px solid #000;border-top-width:2px;"></div>
<span class="t" style="left:1659px;top:223px;font-size:8.2px;color:#fff;transform:scaleX(0.9227);-webkit-text-stroke:0.22px #fff;">SENTINEL</span>
<span class="t" style="left:1659px;top:249px;font-size:8.2px;color:#fde9c8;transform:scaleX(0.9756);-webkit-text-stroke:0.22px #fde9c8;">VM</span>
<div style="left:1718px;top:213px;width:57px;height:27.5px;background:#0a68c4;border:1.3px solid #000;"></div>
<div style="left:1718px;top:238.5px;width:57px;height:27.5px;background:#fdbf52;border:1.3px solid #000;border-top-width:2px;"></div>
<span class="t" style="left:1727px;top:224px;font-size:8.2px;color:#fff;transform:scaleX(0.9227);-webkit-text-stroke:0.22px #fff;">SENTINEL</span>
<span class="t" style="left:1727px;top:249px;font-size:8.2px;color:#fde9c8;transform:scaleX(0.9756);-webkit-text-stroke:0.22px #fde9c8;">VM</span>
<div style="left:1815px;top:247px;width:58px;height:28px;background:#bd6d3a;border:1.3px solid #000;"></div>
<div style="left:1815px;top:273px;width:58px;height:28px;background:#0a68c4;border:1.3px solid #000;border-top-width:2px;"></div>
<div style="left:1815px;top:299px;width:58px;height:28px;background:#fdbf52;border:1.3px solid #000;border-top-width:2px;"></div>
<span class="t" style="left:1824px;top:257px;font-size:8.2px;color:#fff;transform:scaleX(0.9855);-webkit-text-stroke:0.22px #fff;">SLAVE</span>
<span class="t" style="left:1824px;top:284px;font-size:8.2px;color:#fff;transform:scaleX(0.9227);-webkit-text-stroke:0.22px #fff;">SENTINEL</span>
<span class="t" style="left:1824px;top:311px;font-size:8.2px;color:#fde9c8;transform:scaleX(0.9756);-webkit-text-stroke:0.22px #fde9c8;">VM</span>
<div style="left:1884px;top:247px;width:58px;height:28px;background:#bd6d3a;border:1.3px solid #000;"></div>
<div style="left:1884px;top:273px;width:58px;height:28px;background:#0a68c4;border:1.3px solid #000;border-top-width:2px;"></div>
<div style="left:1884px;top:299px;width:58px;height:28px;background:#fdbf52;border:1.3px solid #000;border-top-width:2px;"></div>
<span class="t" style="left:1893px;top:257px;font-size:8.2px;color:#fff;transform:scaleX(0.9855);-webkit-text-stroke:0.22px #fff;">SLAVE</span>
<span class="t" style="left:1893px;top:284px;font-size:8.2px;color:#fff;transform:scaleX(0.9227);-webkit-text-stroke:0.22px #fff;">SENTINEL</span>
<span class="t" style="left:1893px;top:311px;font-size:8.2px;color:#fde9c8;transform:scaleX(0.9756);-webkit-text-stroke:0.22px #fde9c8;">VM</span>
<div style="left:1368px;top:361px;width:57.7px;height:69.8px;background:#fdba8c;border:1.3px solid #000;"></div>
<div style="left:1368px;top:428.8px;width:57.7px;height:28.7px;background:#fdbf52;border:1.3px solid #000;border-top-width:2px;"></div>
<span class="t" style="left:1377.7px;top:371px;font-size:8.2px;color:#111;transform:scaleX(0.9000);-webkit-text-stroke:0.22px #111;">MEFS</span>
<span class="t" style="left:1377.7px;top:393px;font-size:8.2px;color:#111;transform:scaleX(0.8167);-webkit-text-stroke:0.22px #111;">CICS</span>
<span class="t" style="left:1377.7px;top:415px;font-size:8.2px;color:#111;transform:scaleX(0.8991);-webkit-text-stroke:0.22px #111;">REGIONS</span>
<span class="t" style="left:1377.7px;top:440px;font-size:8.2px;color:#fde9c8;transform:scaleX(0.9756);-webkit-text-stroke:0.22px #fde9c8;">VM</span>
<div style="left:1441px;top:363px;width:56.7px;height:69px;background:#fdba8c;border:1.3px solid #000;"></div>
<div style="left:1441px;top:430px;width:56.7px;height:28.5px;background:#fdbf52;border:1.3px solid #000;border-top-width:2px;"></div>
<span class="t" style="left:1450.7px;top:373px;font-size:8.2px;color:#111;transform:scaleX(0.9000);-webkit-text-stroke:0.22px #111;">MEFS</span>
<span class="t" style="left:1450.7px;top:395px;font-size:8.2px;color:#111;transform:scaleX(0.8167);-webkit-text-stroke:0.22px #111;">CICS</span>
<span class="t" style="left:1450.7px;top:417px;font-size:8.2px;color:#111;transform:scaleX(0.8991);-webkit-text-stroke:0.22px #111;">REGIONS</span>
<span class="t" style="left:1450.7px;top:442px;font-size:8.2px;color:#fde9c8;transform:scaleX(0.9756);-webkit-text-stroke:0.22px #fde9c8;">VM</span>
<div style="left:1512px;top:364px;width:56.7px;height:68.8px;background:#fdba8c;border:1.3px solid #000;"></div>
<div style="left:1512px;top:430.8px;width:56.7px;height:28.7px;background:#fdbf52;border:1.3px solid #000;border-top-width:2px;"></div>
<span class="t" style="left:1521.7px;top:374px;font-size:8.2px;color:#111;transform:scaleX(0.9000);-webkit-text-stroke:0.22px #111;">MEFS</span>
<span class="t" style="left:1521.7px;top:396px;font-size:8.2px;color:#111;transform:scaleX(0.8167);-webkit-text-stroke:0.22px #111;">CICS</span>
<span class="t" style="left:1521.7px;top:418px;font-size:8.2px;color:#111;transform:scaleX(0.8991);-webkit-text-stroke:0.22px #111;">REGIONS</span>
<span class="t" style="left:1521.7px;top:442px;font-size:8.2px;color:#fde9c8;transform:scaleX(0.9756);-webkit-text-stroke:0.22px #fde9c8;">VM</span>
<div style="left:1585px;top:363px;width:56.7px;height:69px;background:#fdba8c;border:1.3px solid #000;"></div>
<div style="left:1585px;top:430px;width:56.7px;height:28.5px;background:#fdbf52;border:1.3px solid #000;border-top-width:2px;"></div>
<span class="t" style="left:1594.7px;top:373px;font-size:8.2px;color:#111;transform:scaleX(0.9000);-webkit-text-stroke:0.22px #111;">MEFS</span>
<span class="t" style="left:1594.7px;top:395px;font-size:8.2px;color:#111;transform:scaleX(0.8167);-webkit-text-stroke:0.22px #111;">CICS</span>
<span class="t" style="left:1594.7px;top:417px;font-size:8.2px;color:#111;transform:scaleX(0.8991);-webkit-text-stroke:0.22px #111;">REGIONS</span>
<span class="t" style="left:1594.7px;top:442px;font-size:8.2px;color:#fde9c8;transform:scaleX(0.9756);-webkit-text-stroke:0.22px #fde9c8;">VM</span>
<div style="left:1809px;top:365px;width:57.7px;height:69.3px;background:#fdba8c;border:1.3px solid #000;"></div>
<div style="left:1809px;top:432.3px;width:57.7px;height:28.4px;background:#fdbf52;border:1.3px solid #000;border-top-width:2px;"></div>
<span class="t" style="left:1818.7px;top:375px;font-size:8.2px;color:#111;transform:scaleX(0.9000);-webkit-text-stroke:0.22px #111;">MEFS</span>
<span class="t" style="left:1818.7px;top:397px;font-size:8.2px;color:#111;transform:scaleX(0.8167);-webkit-text-stroke:0.22px #111;">CICS</span>
<span class="t" style="left:1818.7px;top:419px;font-size:8.2px;color:#111;transform:scaleX(0.8991);-webkit-text-stroke:0.22px #111;">REGIONS</span>
<span class="t" style="left:1818.7px;top:444px;font-size:8.2px;color:#fde9c8;transform:scaleX(0.9756);-webkit-text-stroke:0.22px #fde9c8;">VM</span>
<div style="left:1882px;top:366px;width:56.7px;height:69.3px;background:#fdba8c;border:1.3px solid #000;"></div>
<div style="left:1882px;top:433.3px;width:56.7px;height:28.7px;background:#fdbf52;border:1.3px solid #000;border-top-width:2px;"></div>
<span class="t" style="left:1891.7px;top:376px;font-size:8.2px;color:#111;transform:scaleX(0.9000);-webkit-text-stroke:0.22px #111;">MEFS</span>
<span class="t" style="left:1891.7px;top:398px;font-size:8.2px;color:#111;transform:scaleX(0.8167);-webkit-text-stroke:0.22px #111;">CICS</span>
<span class="t" style="left:1891.7px;top:420px;font-size:8.2px;color:#111;transform:scaleX(0.8991);-webkit-text-stroke:0.22px #111;">REGIONS</span>
<span class="t" style="left:1891.7px;top:445px;font-size:8.2px;color:#fde9c8;transform:scaleX(0.9756);-webkit-text-stroke:0.22px #fde9c8;">VM</span>
<div style="left:1953px;top:367px;width:56.7px;height:69.8px;background:#fdba8c;border:1.3px solid #000;"></div>
<div style="left:1953px;top:434.8px;width:56.7px;height:28.9px;background:#fdbf52;border:1.3px solid #000;border-top-width:2px;"></div>
<span class="t" style="left:1962.7px;top:377px;font-size:8.2px;color:#111;transform:scaleX(0.9000);-webkit-text-stroke:0.22px #111;">MEFS</span>
<span class="t" style="left:1962.7px;top:399px;font-size:8.2px;color:#111;transform:scaleX(0.8167);-webkit-text-stroke:0.22px #111;">CICS</span>
<span class="t" style="left:1962.7px;top:421px;font-size:8.2px;color:#111;transform:scaleX(0.8991);-webkit-text-stroke:0.22px #111;">REGIONS</span>
<span class="t" style="left:1962.7px;top:446px;font-size:8.2px;color:#fde9c8;transform:scaleX(0.9756);-webkit-text-stroke:0.22px #fde9c8;">VM</span>
<div style="left:2026px;top:367px;width:56.8px;height:69.2px;background:#fdba8c;border:1.3px solid #000;"></div>
<div style="left:2026px;top:434.2px;width:56.8px;height:28.3px;background:#fdbf52;border:1.3px solid #000;border-top-width:2px;"></div>
<span class="t" style="left:2035.7px;top:377px;font-size:8.2px;color:#111;transform:scaleX(0.9000);-webkit-text-stroke:0.22px #111;">MEFS</span>
<span class="t" style="left:2035.7px;top:399px;font-size:8.2px;color:#111;transform:scaleX(0.8167);-webkit-text-stroke:0.22px #111;">CICS</span>
<span class="t" style="left:2035.7px;top:421px;font-size:8.2px;color:#111;transform:scaleX(0.8991);-webkit-text-stroke:0.22px #111;">REGIONS</span>
<span class="t" style="left:2035.7px;top:446px;font-size:8.2px;color:#fde9c8;transform:scaleX(0.9756);-webkit-text-stroke:0.22px #fde9c8;">VM</span>
<div style="left:1368px;top:490px;width:57.7px;height:69.8px;background:#fdba8c;border:1.3px solid #000;"></div>
<div style="left:1368px;top:557.8px;width:57.7px;height:28.7px;background:#fdbf52;border:1.3px solid #000;border-top-width:2px;"></div>
<span class="t" style="left:1377.7px;top:500px;font-size:8.2px;color:#111;transform:scaleX(0.9000);-webkit-text-stroke:0.22px #111;">MEFS</span>
<span class="t" style="left:1377.7px;top:522px;font-size:8.2px;color:#111;transform:scaleX(0.8167);-webkit-text-stroke:0.22px #111;">CICS</span>
<span class="t" style="left:1377.7px;top:544px;font-size:8.2px;color:#111;transform:scaleX(0.8991);-webkit-text-stroke:0.22px #111;">REGIONS</span>
<span class="t" style="left:1377.7px;top:569px;font-size:8.2px;color:#fde9c8;transform:scaleX(0.9756);-webkit-text-stroke:0.22px #fde9c8;">VM</span>
<div style="left:1441px;top:492px;width:56.7px;height:69.2px;background:#fdba8c;border:1.3px solid #000;"></div>
<div style="left:1441px;top:559.2px;width:56.7px;height:28.6px;background:#fdbf52;border:1.3px solid #000;border-top-width:2px;"></div>
<span class="t" style="left:1450.7px;top:502px;font-size:8.2px;color:#111;transform:scaleX(0.9000);-webkit-text-stroke:0.22px #111;">MEFS</span>
<span class="t" style="left:1450.7px;top:524px;font-size:8.2px;color:#111;transform:scaleX(0.8167);-webkit-text-stroke:0.22px #111;">CICS</span>
<span class="t" style="left:1450.7px;top:546px;font-size:8.2px;color:#111;transform:scaleX(0.8991);-webkit-text-stroke:0.22px #111;">REGIONS</span>
<span class="t" style="left:1450.7px;top:571px;font-size:8.2px;color:#fde9c8;transform:scaleX(0.9756);-webkit-text-stroke:0.22px #fde9c8;">VM</span>
<div style="left:1512px;top:493px;width:56.7px;height:69px;background:#fdba8c;border:1.3px solid #000;"></div>
<div style="left:1512px;top:560px;width:56.7px;height:28.7px;background:#fdbf52;border:1.3px solid #000;border-top-width:2px;"></div>
<span class="t" style="left:1521.7px;top:503px;font-size:8.2px;color:#111;transform:scaleX(0.9000);-webkit-text-stroke:0.22px #111;">MEFS</span>
<span class="t" style="left:1521.7px;top:525px;font-size:8.2px;color:#111;transform:scaleX(0.8167);-webkit-text-stroke:0.22px #111;">CICS</span>
<span class="t" style="left:1521.7px;top:547px;font-size:8.2px;color:#111;transform:scaleX(0.8991);-webkit-text-stroke:0.22px #111;">REGIONS</span>
<span class="t" style="left:1521.7px;top:572px;font-size:8.2px;color:#fde9c8;transform:scaleX(0.9756);-webkit-text-stroke:0.22px #fde9c8;">VM</span>
<div style="left:1584px;top:493px;width:57.7px;height:69px;background:#fdba8c;border:1.3px solid #000;"></div>
<div style="left:1584px;top:560px;width:57.7px;height:28.7px;background:#fdbf52;border:1.3px solid #000;border-top-width:2px;"></div>
<span class="t" style="left:1593.7px;top:503px;font-size:8.2px;color:#111;transform:scaleX(0.9000);-webkit-text-stroke:0.22px #111;">MEFS</span>
<span class="t" style="left:1593.7px;top:525px;font-size:8.2px;color:#111;transform:scaleX(0.8167);-webkit-text-stroke:0.22px #111;">CICS</span>
<span class="t" style="left:1593.7px;top:547px;font-size:8.2px;color:#111;transform:scaleX(0.8991);-webkit-text-stroke:0.22px #111;">REGIONS</span>
<span class="t" style="left:1593.7px;top:572px;font-size:8.2px;color:#fde9c8;transform:scaleX(0.9756);-webkit-text-stroke:0.22px #fde9c8;">VM</span>
<div style="left:1809px;top:493px;width:57.7px;height:69px;background:#fdba8c;border:1.3px solid #000;"></div>
<div style="left:1809px;top:560px;width:57.7px;height:28.5px;background:#fdbf52;border:1.3px solid #000;border-top-width:2px;"></div>
<span class="t" style="left:1818.7px;top:503px;font-size:8.2px;color:#111;transform:scaleX(0.9000);-webkit-text-stroke:0.22px #111;">MEFS</span>
<span class="t" style="left:1818.7px;top:525px;font-size:8.2px;color:#111;transform:scaleX(0.8167);-webkit-text-stroke:0.22px #111;">CICS</span>
<span class="t" style="left:1818.7px;top:547px;font-size:8.2px;color:#111;transform:scaleX(0.8991);-webkit-text-stroke:0.22px #111;">REGIONS</span>
<span class="t" style="left:1818.7px;top:572px;font-size:8.2px;color:#fde9c8;transform:scaleX(0.9756);-webkit-text-stroke:0.22px #fde9c8;">VM</span>
<div style="left:1882px;top:493px;width:56.7px;height:69px;background:#fdba8c;border:1.3px solid #000;"></div>
<div style="left:1882px;top:560px;width:56.7px;height:28.5px;background:#fdbf52;border:1.3px solid #000;border-top-width:2px;"></div>
<span class="t" style="left:1891.7px;top:503px;font-size:8.2px;color:#111;transform:scaleX(0.9000);-webkit-text-stroke:0.22px #111;">MEFS</span>
<span class="t" style="left:1891.7px;top:525px;font-size:8.2px;color:#111;transform:scaleX(0.8167);-webkit-text-stroke:0.22px #111;">CICS</span>
<span class="t" style="left:1891.7px;top:547px;font-size:8.2px;color:#111;transform:scaleX(0.8991);-webkit-text-stroke:0.22px #111;">REGIONS</span>
<span class="t" style="left:1891.7px;top:572px;font-size:8.2px;color:#fde9c8;transform:scaleX(0.9756);-webkit-text-stroke:0.22px #fde9c8;">VM</span>
<div style="left:1953px;top:493px;width:56.7px;height:69px;background:#fdba8c;border:1.3px solid #000;"></div>
<div style="left:1953px;top:560px;width:56.7px;height:28.5px;background:#fdbf52;border:1.3px solid #000;border-top-width:2px;"></div>
<span class="t" style="left:1962.7px;top:503px;font-size:8.2px;color:#111;transform:scaleX(0.9000);-webkit-text-stroke:0.22px #111;">MEFS</span>
<span class="t" style="left:1962.7px;top:525px;font-size:8.2px;color:#111;transform:scaleX(0.8167);-webkit-text-stroke:0.22px #111;">CICS</span>
<span class="t" style="left:1962.7px;top:547px;font-size:8.2px;color:#111;transform:scaleX(0.8991);-webkit-text-stroke:0.22px #111;">REGIONS</span>
<span class="t" style="left:1962.7px;top:572px;font-size:8.2px;color:#fde9c8;transform:scaleX(0.9756);-webkit-text-stroke:0.22px #fde9c8;">VM</span>
<div style="left:2026px;top:493px;width:56.8px;height:69px;background:#fdba8c;border:1.3px solid #000;"></div>
<div style="left:2026px;top:560px;width:56.8px;height:28.5px;background:#fdbf52;border:1.3px solid #000;border-top-width:2px;"></div>
<span class="t" style="left:2035.7px;top:503px;font-size:8.2px;color:#111;transform:scaleX(0.9000);-webkit-text-stroke:0.22px #111;">MEFS</span>
<span class="t" style="left:2035.7px;top:525px;font-size:8.2px;color:#111;transform:scaleX(0.8167);-webkit-text-stroke:0.22px #111;">CICS</span>
<span class="t" style="left:2035.7px;top:547px;font-size:8.2px;color:#111;transform:scaleX(0.8991);-webkit-text-stroke:0.22px #111;">REGIONS</span>
<span class="t" style="left:2035.7px;top:572px;font-size:8.2px;color:#fde9c8;transform:scaleX(0.9756);-webkit-text-stroke:0.22px #fde9c8;">VM</span>
<div style="left:1663px;top:412px;width:38px;height:49px;border:1px solid #111;background:linear-gradient(135deg,#eef5fd 0,#c9dff8 45%,#98c0f0 100%);"></div>
<span class="t" style="left:1677.8px;top:433px;font-size:8.2px;color:#111;transform:scaleX(0.9403);-webkit-text-stroke:0.22px #111;">DB2</span>
<span class="t" style="left:1682.8px;top:444px;font-size:8.2px;color:#111;transform:scaleX(0.7313);-webkit-text-stroke:0.22px #111;">P</span>
<div style="left:1756px;top:412px;width:38px;height:49px;border:1px solid #111;background:linear-gradient(135deg,#eef5fd 0,#c9dff8 45%,#98c0f0 100%);"></div>
<span class="t" style="left:1770.8px;top:433px;font-size:8.2px;color:#111;transform:scaleX(0.9403);-webkit-text-stroke:0.22px #111;">DB2</span>
<span class="t" style="left:1775.8px;top:444px;font-size:8.2px;color:#111;transform:scaleX(0.7313);-webkit-text-stroke:0.22px #111;">P</span>
<div style="left:1663px;top:541px;width:38px;height:49px;border:1px solid #111;background:linear-gradient(135deg,#eef5fd 0,#c9dff8 45%,#98c0f0 100%);"></div>
<span class="t" style="left:1677.8px;top:562px;font-size:8.2px;color:#111;transform:scaleX(0.9403);-webkit-text-stroke:0.22px #111;">DB2</span>
<span class="t" style="left:1682.8px;top:573px;font-size:8.2px;color:#111;transform:scaleX(0.7313);-webkit-text-stroke:0.22px #111;">P</span>
<div style="left:1756px;top:541px;width:38px;height:49px;border:1px solid #111;background:linear-gradient(135deg,#eef5fd 0,#c9dff8 45%,#98c0f0 100%);"></div>
<span class="t" style="left:1770.8px;top:562px;font-size:8.2px;color:#111;transform:scaleX(0.9403);-webkit-text-stroke:0.22px #111;">DB2</span>
<span class="t" style="left:1775.8px;top:573px;font-size:8.2px;color:#111;transform:scaleX(0.7313);-webkit-text-stroke:0.22px #111;">P</span>
<span class="t" style="left:1719px;top:426px;font-size:8.2px;color:#e81123;transform:scaleX(0.9140);-webkit-text-stroke:0.22px #e81123;">pure</span>
<span class="t" style="left:1719px;top:444px;font-size:8.2px;color:#e81123;transform:scaleX(0.8881);-webkit-text-stroke:0.22px #e81123;">scale</span>
<span class="t" style="left:1715px;top:552px;font-size:8.2px;color:#e81123;transform:scaleX(0.9140);-webkit-text-stroke:0.22px #e81123;">pure</span>
<span class="t" style="left:1715px;top:571px;font-size:8.2px;color:#e81123;transform:scaleX(0.8881);-webkit-text-stroke:0.22px #e81123;">scale</span>
<div style="left:1419px;top:664px;width:80px;height:64px;background:#b9b9b9;border:1px solid #222;"></div>
<div style="left:1424px;top:668px;width:73.5px;height:26.5px;background:#bdbdbd;border:1.3px solid #111;"></div>
<div style="left:1423px;top:695.5px;width:74px;height:27.5px;background:#bdbdbd;border:1.3px solid #111;"></div>
<span class="t" style="left:1444.5px;top:679px;font-size:8.2px;color:#222;transform:scaleX(0.8924);-webkit-text-stroke:0.22px #222;">WRAPPER</span>
<span class="t" style="left:1447.5px;top:706px;font-size:8.2px;color:#222;transform:scaleX(0.9447);-webkit-text-stroke:0.22px #222;">BETA 48</span>
<div style="left:1965px;top:664px;width:81px;height:64px;background:#b9b9b9;border:1px solid #222;"></div>
<div style="left:1970px;top:668px;width:73.5px;height:26.5px;background:#bdbdbd;border:1.3px solid #111;"></div>
<div style="left:1969px;top:695.5px;width:74px;height:27.5px;background:#bdbdbd;border:1.3px solid #111;"></div>
<span class="t" style="left:1990.5px;top:679px;font-size:8.2px;color:#222;transform:scaleX(0.8924);-webkit-text-stroke:0.22px #222;">WRAPPER</span>
<span class="t" style="left:1993.5px;top:706px;font-size:8.2px;color:#222;transform:scaleX(0.9447);-webkit-text-stroke:0.22px #222;">BETA 48</span>
<div style="left:1593px;top:722px;width:288.5px;height:50px;border:1px solid #1010e0;background:transparent;"></div>
<div style="left:1641px;top:727px;width:198px;height:38px;background:#fdbb26;border:1px solid #111;"></div>
<span class="t" style="left:1728px;top:739px;font-size:12px;color:#111;transform:scaleX(1.0464);font-weight:bold;">F5(s)</span>
<div style="left:1469px;top:778px;width:81px;height:38px;background:#fd1219;border:1px solid #111;"></div>
<span class="t" style="left:1498.5px;top:790px;font-size:12px;color:#fff;transform:scaleX(1.0503);font-weight:bold;">TWS</span>
<div style="left:1705px;top:793px;width:198px;height:38px;background:#fdba8c;border:1px solid #111;"></div>
<span class="t" style="left:1748px;top:805px;font-size:12px;color:#111;transform:scaleX(1.1612);font-weight:bold;">3270</span>
<span class="t" style="left:1815px;top:805px;font-size:12px;color:#111;transform:scaleX(1.0991);font-weight:bold;">PL@net</span>
<svg style="left:1172px;top:162px" width="1075" height="783" viewBox="0 0 1075 783"><polyline points="223.5,200.0 223.5,188.5 452.5,188.5" fill="none" stroke="#000" stroke-width="1.1" stroke-dasharray="2 1.500"/><polyline points="298.5,188.5 298.5,201.0" fill="none" stroke="#000" stroke-width="1.1"/><polyline points="374.5,188.5 374.5,202.0" fill="none" stroke="#000" stroke-width="1.1"/><polyline points="452.5,187.5 452.5,201.0" fill="none" stroke="#000" stroke-width="1.1"/><polyline points="452.5,187.5 510.5,187.5" fill="none" stroke="#000" stroke-width="1.1" stroke-dasharray="2 1.500"/><polyline points="510.5,187.5 510.5,216.0" fill="none" stroke="#000" stroke-width="1.1"/><polyline points="510.5,216.0 510.5,244.0" fill="none" stroke="#000" stroke-width="1.1" stroke-dasharray="2 1.500"/><polyline points="510.5,188.5 661.5,188.5" fill="none" stroke="#000" stroke-width="1.1" stroke-dasharray="2 1.500"/><polyline points="600.5,188.5 600.5,242.5" fill="none" stroke="#000" stroke-width="1.1"/><polyline points="661.5,188.5 661.5,203.0" fill="none" stroke="#000" stroke-width="1.1"/><polyline points="661.5,190.5 890.5,190.5" fill="none" stroke="#000" stroke-width="1.1" stroke-dasharray="2 1.500"/><polyline points="736.5,190.5 736.5,204.0" fill="none" stroke="#000" stroke-width="1.1"/><polyline points="812.5,190.5 812.5,205.0" fill="none" stroke="#000" stroke-width="1.1"/><polyline points="890.5,190.5 890.5,205.0" fill="none" stroke="#000" stroke-width="1.1" stroke-dasharray="2 1.500"/><polyline points="531.0,274.5 582.0,274.5" fill="none" stroke="#000" stroke-width="1.1"/><polygon points="531.0,274.5 548.0,271.0 548.0,278.0" fill="#000"/><polygon points="582.0,274.5 565.0,278.0 565.0,271.0" fill="#000"/><polyline points="531.0,403.5 582.0,403.5" fill="none" stroke="#000" stroke-width="1.1"/><polygon points="531.0,403.5 548.0,400.0 548.0,407.0" fill="#000"/><polygon points="582.0,403.5 565.0,407.0 565.0,400.0" fill="#000"/><polyline points="215.5,425.0 215.5,436.5 601.5,436.5" fill="none" stroke="#1e73be" stroke-width="1.1" stroke-dasharray="2 1.500"/><polyline points="291.5,426.0 291.5,436.5" fill="none" stroke="#1e73be" stroke-width="1.1"/><polyline points="364.5,427.0 364.5,436.5" fill="none" stroke="#1e73be" stroke-width="1.1" stroke-dasharray="2 1.500"/><polyline points="436.5,427.0 436.5,436.5" fill="none" stroke="#1e73be" stroke-width="1.1"/><polyline points="508.5,428.0 508.5,436.5" fill="none" stroke="#1e73be" stroke-width="1.1"/><polyline points="601.5,427.0 601.5,436.5" fill="none" stroke="#1e73be" stroke-width="1.1" stroke-dasharray="2 1.500"/><polyline points="601.5,436.5 737.5,436.5" fill="none" stroke="#1e73be" stroke-width="1.1"/><polyline points="661.5,427.0 661.5,436.5" fill="none" stroke="#1e73be" stroke-width="1.1"/><polyline points="737.5,427.0 737.5,436.5" fill="none" stroke="#1e73be" stroke-width="1.1"/><polyline points="737.5,436.5 881.5,436.5 881.5,427.0" fill="none" stroke="#1e73be" stroke-width="1.1" stroke-dasharray="2 1.500"/><polyline points="809.5,427.0 809.5,436.5" fill="none" stroke="#1e73be" stroke-width="1.1"/><polyline points="229.5,425.0 229.5,466.5 305.5,466.5" fill="none" stroke="#10b050" stroke-width="1.1" stroke-dasharray="2 1.500"/><polyline points="305.5,426.0 305.5,466.5" fill="none" stroke="#10b050" stroke-width="1.1" stroke-dasharray="2 1.500"/><polyline points="305.5,466.5 449.5,466.5" fill="none" stroke="#10b050" stroke-width="1.3"/><polyline points="377.5,427.0 377.5,466.5" fill="none" stroke="#10b050" stroke-width="1.3"/><polyline points="449.5,427.0 449.5,466.5" fill="none" stroke="#10b050" stroke-width="1.1" stroke-dasharray="2 1.500"/><polyline points="451.5,560.0 451.5,465.5 676.5,465.5" fill="none" stroke="#10b050" stroke-width="1.1" stroke-dasharray="2 1.500"/><polyline points="676.5,427.0 676.5,466.5" fill="none" stroke="#10b050" stroke-width="1.1" stroke-dasharray="2 1.500"/><polyline points="675.5,560.0 675.5,466.0" fill="none" stroke="#10b050" stroke-width="1.1" stroke-dasharray="2 1.500"/><polyline points="676.5,466.5 895.5,466.5 895.5,427.0" fill="none" stroke="#10b050" stroke-width="1.1" stroke-dasharray="2 1.500"/><polyline points="751.5,427.0 751.5,466.5" fill="none" stroke="#10b050" stroke-width="1.1" stroke-dasharray="2 1.500"/><polyline points="823.5,427.0 823.5,466.5" fill="none" stroke="#10b050" stroke-width="1.1"/><polyline points="327.0,516.5 436.5,516.5 436.5,557.0" fill="none" stroke="#000" stroke-width="1.1" stroke-dasharray="2 1.500"/><polyline points="329.0,542.5 429.5,542.5 429.5,557.0" fill="none" stroke="#000" stroke-width="1.1" stroke-dasharray="2 1.500"/><polyline points="793.0,519.5 688.5,519.5" fill="none" stroke="#000" stroke-width="1.1"/><polyline points="688.5,519.5 688.5,558.0" fill="none" stroke="#000" stroke-width="1.1" stroke-dasharray="2 1.500"/><polyline points="793.0,543.5 700.5,543.5 700.5,558.0" fill="none" stroke="#000" stroke-width="1.1" stroke-dasharray="2 1.500"/><polyline points="422.0,587.5 336.5,587.5" fill="none" stroke="#000" stroke-width="1.1"/><polyline points="336.5,587.5 336.5,616.0" fill="none" stroke="#000" stroke-width="1.1" stroke-dasharray="2 1.500"/><polyline points="566.0,610.5 628.0,631.0" fill="none" stroke="#000" stroke-width="1.1"/><polygon points="628.0,631.0 610.8,629.0 613.0,622.3" fill="#000"/></svg>
</div>
<div style="left:2271px;top:138px;width:288px;height:848px;background:#f0f0f0;"></div>
<div style="left:2271px;top:138px;width:288px;height:20px;background:#9b9d9c;border-top:1px solid #c9c9c9;border-left:1px solid #d4d4d4;"></div>
<span class="t" style="left:2275.2px;top:143px;font-size:11px;color:#504e5a;transform:scaleX(1.0213);">Properties</span>
<svg style="left:2529px;top:143px" width="10" height="10" viewBox="0 0 10 10"><path d="M3 1.500h4v4.500M3 1.500v4.500M6 1.500v4.500M1.500 6.500h7M5 6.500v3.500" stroke="#333" stroke-width="1.100" fill="none"/></svg>
<svg style="left:2545px;top:143px" width="10" height="10" viewBox="0 0 10 10"><path d="M1.500 1.500l7 7M8.500 1.500l-7 7" stroke="#333" stroke-width="1.200"/></svg>
<div style="left:2271px;top:158px;width:288px;height:23.5px;background:#fff;border-left:1px solid #e4e4e4;"></div>
<span class="t" style="left:2274.8px;top:164px;font-size:13px;font-weight:bold;transform:scaleX(0.9947);">Application</span>
<svg style="left:2546px;top:169px" width="10" height="6" viewBox="0 0 10 6"><path d="M1 1l4 4 4-4" stroke="#444" stroke-width="1" fill="none"/></svg>
<div style="left:2271px;top:181.5px;width:288px;height:23.5px;background:linear-gradient(#cfd2d8 0,#c6c9d0 7px,#b3b8c2 14px,#9aa0ad 23px);border-top:1px solid #8f949c;"></div>
<svg style="left:2276px;top:185px" width="18" height="17" viewBox="0 0 18 17"><rect x=".5" y="1" width="5.500" height="5.500" fill="#fff" stroke="#6aa0e0"/><path d="M2 3.800h2.800M3.400 2.400v2.800" stroke="#000" stroke-width="1"/><rect x=".5" y="10" width="5.500" height="5.500" fill="#fff" stroke="#6aa0e0"/><path d="M2 12.800h2.800M3.400 11.400v2.800" stroke="#000" stroke-width="1"/><path d="M8 3h4M8 14h4" stroke="#555"/><path d="M10 5h6M10 7h6M10 9h6M10 11h6" stroke="#8ab8a0" stroke-dasharray="2 1"/></svg>
<svg style="left:2298px;top:185px" width="18" height="17" viewBox="0 0 18 17"><text x="1" y="7.500" font-family="Liberation Serif,serif" font-weight="bold" font-size="9" fill="#2f55c0">A</text><text x="1.500" y="15.500" font-family="Liberation Serif,serif" font-weight="bold" font-size="9" fill="#a03030">Z</text><path d="M13.500 1v12" stroke="#000" stroke-width="1"/><path d="M11.500 12h4l-2 3.500z" fill="#000"/></svg>
<svg style="left:2322px;top:186px" width="13" height="14" viewBox="0 0 13 14"><rect x=".5" y=".5" width="11.500" height="12.500" fill="#fff" stroke="#4a78d0"/><rect x=".5" y=".5" width="11.500" height="2.500" fill="#7aa0e8"/><path d="M2 5.500h2M5 5.500h5.500M2 7.500h2M5 7.500h5.500M2 9.500h2M5 9.500h5.500M2 11.500h2M5 11.500h5.500" stroke="#3a68c8" stroke-width="1"/></svg>
<svg style="left:2344px;top:186px" width="12" height="15" viewBox="0 0 12 15"><path d="M9.500 0L2 7.500h3.500L1 14.500l9-8H6z" fill="#f8a818" stroke="#f0d020" stroke-width=".6"/></svg>
<div style="left:2271px;top:204.5px;width:272px;height:723.0px;overflow:hidden;"><div style="left:0px;top:0px;width:272px;height:743px;background:#ebebeb;"></div><svg style="left:4.3px;top:4px" width="9" height="9" viewBox="0 0 9 9"><rect x=".5" y=".5" width="8" height="8" fill="#fff" stroke="#9a9a9a"/><path d="M2 4.500h5" stroke="#3a5fc0" stroke-width="1"/></svg><span class="t" style="left:20.9px;top:2.5px;font-size:12px;font-weight:bold;color:#8c8c8c;transform:scaleX(0.968);">Appearance</span><div style="left:17px;top:17px;width:255px;height:17px;background:#fff;border-bottom:1px solid #e6e6e6;"></div><div style="left:144px;top:17px;width:1px;height:17px;background:#e2e2e2;"></div><span class="t" style="left:20.5px;top:20px;font-size:11px;color:#000;transform:scaleX(0.965);">Visible</span><span class="t" style="left:148.5px;top:20px;font-size:11px;color:#000;transform:scaleX(0.965);">True</span><div style="left:17px;top:34px;width:255px;height:17px;background:#fff;border-bottom:1px solid #e6e6e6;"></div><div style="left:144px;top:34px;width:1px;height:17px;background:#e2e2e2;"></div><span class="t" style="left:20.5px;top:37px;font-size:11px;color:#000;transform:scaleX(0.965);">Caption</span><div style="left:17px;top:51px;width:255px;height:17px;background:#fff;border-bottom:1px solid #e6e6e6;"></div><div style="left:144px;top:51px;width:1px;height:17px;background:#e2e2e2;"></div><svg style="left:4.3px;top:55px" width="9" height="9" viewBox="0 0 9 9"><rect x=".5" y=".5" width="8" height="8" fill="#fff" stroke="#9a9a9a"/><path d="M2 4.500h5" stroke="#3a5fc0" stroke-width="1"/><path d="M4.500 2v5" stroke="#3a5fc0" stroke-width="1"/></svg><span class="t" style="left:20.5px;top:54px;font-size:11px;color:#000;transform:scaleX(0.965);">Object Position/Size</span><span class="t" style="left:148.5px;top:54px;font-size:11px;color:#000;transform:scaleX(0.965);">504, 70, 1012, 124</span><svg style="left:4.3px;top:72px" width="9" height="9" viewBox="0 0 9 9"><rect x=".5" y=".5" width="8" height="8" fill="#fff" stroke="#9a9a9a"/><path d="M2 4.500h5" stroke="#3a5fc0" stroke-width="1"/></svg><span class="t" style="left:20.9px;top:70.5px;font-size:12px;font-weight:bold;color:#8c8c8c;transform:scaleX(0.968);">Identity</span><div style="left:17px;top:85px;width:255px;height:17px;background:#fff;border-bottom:1px solid #e6e6e6;"></div><div style="left:144px;top:85px;width:1px;height:17px;background:#e2e2e2;"></div><span class="t" style="left:20.5px;top:88px;font-size:11px;color:#000;transform:scaleX(0.965);">Name</span><span class="t" style="left:148.5px;top:88px;font-size:11px;color:#000;transform:scaleX(0.965);">Element n_45</span><div style="left:17px;top:102px;width:255px;height:17px;background:#fff;border-bottom:1px solid #e6e6e6;"></div><div style="left:144px;top:102px;width:1px;height:17px;background:#e2e2e2;"></div><span class="t" style="left:20.5px;top:105px;font-size:11px;color:#8a8a8a;transform:scaleX(0.965);">ID</span><span class="t" style="left:148.5px;top:105px;font-size:11px;color:#8a8a8a;transform:scaleX(0.965);">guid_47190_012506_9...</span><div style="left:17px;top:119px;width:255px;height:17px;background:#fff;border-bottom:1px solid #e6e6e6;"></div><div style="left:144px;top:119px;width:1px;height:17px;background:#e2e2e2;"></div><span class="t" style="left:20.5px;top:122px;font-size:11px;color:#8a8a8a;transform:scaleX(0.965);">Type</span><span class="t" style="left:148.5px;top:122px;font-size:11px;color:#8a8a8a;transform:scaleX(0.965);">type_text</span><svg style="left:4.3px;top:140px" width="9" height="9" viewBox="0 0 9 9"><rect x=".5" y=".5" width="8" height="8" fill="#fff" stroke="#9a9a9a"/><path d="M2 4.500h5" stroke="#3a5fc0" stroke-width="1"/></svg><span class="t" style="left:20.9px;top:138.5px;font-size:12px;font-weight:bold;color:#8c8c8c;transform:scaleX(0.968);">Text, Police and Font</span><div style="left:17px;top:153px;width:255px;height:17px;background:#fff;border-bottom:1px solid #e6e6e6;"></div><div style="left:144px;top:153px;width:1px;height:17px;background:#e2e2e2;"></div><span class="t" style="left:20.5px;top:156px;font-size:11px;color:#000;transform:scaleX(0.965);">Font</span><span class="t" style="left:148.5px;top:156px;font-size:11px;color:#000;transform:scaleX(0.965);">Arial(8)</span><div style="left:17px;top:170px;width:255px;height:17px;background:#fff;border-bottom:1px solid #e6e6e6;"></div><div style="left:144px;top:170px;width:1px;height:17px;background:#e2e2e2;"></div><span class="t" style="left:20.5px;top:173px;font-size:11px;color:#000;transform:scaleX(0.965);">Text</span><span class="t" style="left:148.5px;top:173px;font-size:11px;color:#000;transform:scaleX(0.965);">Classes overview for Ul...</span><div style="left:17px;top:187px;width:255px;height:17px;background:#fff;border-bottom:1px solid #e6e6e6;"></div><div style="left:144px;top:187px;width:1px;height:17px;background:#e2e2e2;"></div><span class="t" style="left:20.5px;top:190px;font-size:11px;color:#000;transform:scaleX(0.965);">Text Align</span><span class="t" style="left:148.5px;top:190px;font-size:11px;color:#000;transform:scaleX(0.965);">None</span><div style="left:17px;top:204px;width:255px;height:17px;background:#fff;border-bottom:1px solid #e6e6e6;"></div><div style="left:144px;top:204px;width:1px;height:17px;background:#e2e2e2;"></div><span class="t" style="left:20.5px;top:207px;font-size:11px;color:#000;transform:scaleX(0.965);">Left Margin</span><span class="t" style="left:148.5px;top:207px;font-size:11px;color:#000;transform:scaleX(0.965);">10</span><div style="left:17px;top:221px;width:255px;height:17px;background:#fff;border-bottom:1px solid #e6e6e6;"></div><div style="left:144px;top:221px;width:1px;height:17px;background:#e2e2e2;"></div><span class="t" style="left:20.5px;top:224px;font-size:11px;color:#000;transform:scaleX(0.965);">Top Margin</span><span class="t" style="left:148.5px;top:224px;font-size:11px;color:#000;transform:scaleX(0.965);">10</span><div style="left:17px;top:238px;width:255px;height:17px;background:#fff;border-bottom:1px solid #e6e6e6;"></div><div style="left:144px;top:238px;width:1px;height:17px;background:#e2e2e2;"></div><span class="t" style="left:20.5px;top:241px;font-size:11px;color:#000;transform:scaleX(0.965);">Comments</span><div style="left:17px;top:255px;width:255px;height:17px;background:#fff;border-bottom:1px solid #e6e6e6;"></div><div style="left:144px;top:255px;width:1px;height:17px;background:#e2e2e2;"></div><span class="t" style="left:20.5px;top:258px;font-size:11px;color:#000;transform:scaleX(0.965);">Font Name</span><span class="t" style="left:148.5px;top:258px;font-size:11px;color:#000;transform:scaleX(0.965);">Calibri</span><div style="left:17px;top:272px;width:255px;height:17px;background:#fff;border-bottom:1px solid #e6e6e6;"></div><div style="left:144px;top:272px;width:1px;height:17px;background:#e2e2e2;"></div><span class="t" style="left:20.5px;top:275px;font-size:11px;color:#000;transform:scaleX(0.965);">Font Size</span><span class="t" style="left:148.5px;top:275px;font-size:11px;color:#000;transform:scaleX(0.965);">24</span><svg style="left:4.3px;top:293px" width="9" height="9" viewBox="0 0 9 9"><rect x=".5" y=".5" width="8" height="8" fill="#fff" stroke="#9a9a9a"/><path d="M2 4.500h5" stroke="#3a5fc0" stroke-width="1"/></svg><span class="t" style="left:20.9px;top:291.5px;font-size:12px;font-weight:bold;color:#8c8c8c;transform:scaleX(0.968);">Misc</span><div style="left:17px;top:306px;width:255px;height:17px;background:#fff;border-bottom:1px solid #e6e6e6;"></div><div style="left:144px;top:306px;width:1px;height:17px;background:#e2e2e2;"></div><span class="t" style="left:20.5px;top:309px;font-size:11px;color:#000;transform:scaleX(0.965);">Rotation Angle</span><span class="t" style="left:148.5px;top:309px;font-size:11px;color:#000;transform:scaleX(0.965);">0</span><div style="left:17px;top:323px;width:255px;height:17px;background:#fff;border-bottom:1px solid #e6e6e6;"></div><div style="left:144px;top:323px;width:1px;height:17px;background:#e2e2e2;"></div><span class="t" style="left:20.5px;top:326px;font-size:11px;color:#000;transform:scaleX(0.965);">Has Fill Color</span><span class="t" style="left:148.5px;top:326px;font-size:11px;color:#000;transform:scaleX(0.965);">True</span><div style="left:17px;top:340px;width:255px;height:17px;background:#fff;border-bottom:1px solid #e6e6e6;"></div><div style="left:144px;top:340px;width:1px;height:17px;background:#e2e2e2;"></div><span class="t" style="left:20.5px;top:343px;font-size:11px;color:#000;transform:scaleX(0.965);">Is Fill Solid Color</span><span class="t" style="left:148.5px;top:343px;font-size:11px;color:#000;transform:scaleX(0.965);">True</span><div style="left:17px;top:357px;width:255px;height:17px;background:#fff;border-bottom:1px solid #e6e6e6;"></div><div style="left:144px;top:357px;width:1px;height:17px;background:#e2e2e2;"></div><span class="t" style="left:20.5px;top:360px;font-size:11px;color:#000;transform:scaleX(0.965);">Has Line Color</span><span class="t" style="left:148.5px;top:360px;font-size:11px;color:#000;transform:scaleX(0.965);">False</span><div style="left:17px;top:374px;width:255px;height:17px;background:#fff;border-bottom:1px solid #e6e6e6;"></div><div style="left:144px;top:374px;width:1px;height:17px;background:#e2e2e2;"></div><span class="t" style="left:20.5px;top:377px;font-size:11px;color:#000;transform:scaleX(0.965);">Fill Color</span><div style="left:147px;top:376.5px;width:13px;height:12.5px;background:#ffff31;border:1px solid #222;"></div><span class="t" style="left:164.8px;top:377px;font-size:11px;color:#000;transform:scaleX(0.965);">ffff31</span><div style="left:17px;top:391px;width:255px;height:17px;background:#fff;border-bottom:1px solid #e6e6e6;"></div><div style="left:144px;top:391px;width:1px;height:17px;background:#e2e2e2;"></div><span class="t" style="left:20.5px;top:394px;font-size:11px;color:#000;transform:scaleX(0.965);">Line Color</span><div style="left:147px;top:393.5px;width:13px;height:12.5px;background:#000000;border:1px solid #222;"></div><span class="t" style="left:164.8px;top:394px;font-size:11px;color:#000;transform:scaleX(0.965);">000000</span><div style="left:17px;top:408px;width:255px;height:17px;background:#fff;border-bottom:1px solid #e6e6e6;"></div><div style="left:144px;top:408px;width:1px;height:17px;background:#e2e2e2;"></div><span class="t" style="left:20.5px;top:411px;font-size:11px;color:#000;transform:scaleX(0.965);">Arrow Type</span><span class="t" style="left:148.5px;top:411px;font-size:11px;color:#000;transform:scaleX(0.965);">None</span><div style="left:17px;top:425px;width:255px;height:17px;background:#fff;border-bottom:1px solid #e6e6e6;"></div><div style="left:144px;top:425px;width:1px;height:17px;background:#e2e2e2;"></div><span class="t" style="left:20.5px;top:428px;font-size:11px;color:#000;transform:scaleX(0.965);">Dash Line Type</span><span class="t" style="left:148.5px;top:428px;font-size:11px;color:#000;transform:scaleX(0.965);">Solid</span><svg style="left:4.3px;top:446px" width="9" height="9" viewBox="0 0 9 9"><rect x=".5" y=".5" width="8" height="8" fill="#fff" stroke="#9a9a9a"/><path d="M2 4.500h5" stroke="#3a5fc0" stroke-width="1"/></svg><span class="t" style="left:20.9px;top:444.5px;font-size:12px;font-weight:bold;color:#8c8c8c;transform:scaleX(0.968);">Global Misc</span><div style="left:17px;top:459px;width:255px;height:17px;background:#fff;border-bottom:1px solid #e6e6e6;"></div><div style="left:144px;top:459px;width:1px;height:17px;background:#e2e2e2;"></div><span class="t" style="left:20.5px;top:462px;font-size:11px;color:#000;transform:scaleX(0.965);">View Names</span><span class="t" style="left:148.5px;top:462px;font-size:11px;color:#000;transform:scaleX(0.965);">False</span><div style="left:17px;top:476px;width:255px;height:17px;background:#fff;border-bottom:1px solid #e6e6e6;"></div><div style="left:144px;top:476px;width:1px;height:17px;background:#e2e2e2;"></div><span class="t" style="left:20.5px;top:479px;font-size:11px;color:#000;transform:scaleX(0.965);">Show Connectors</span><span class="t" style="left:148.5px;top:479px;font-size:11px;color:#000;transform:scaleX(0.965);">False</span><div style="left:17px;top:493px;width:255px;height:17px;background:#fff;border-bottom:1px solid #e6e6e6;"></div><div style="left:144px;top:493px;width:1px;height:17px;background:#e2e2e2;"></div><span class="t" style="left:20.5px;top:496px;font-size:11px;color:#000;transform:scaleX(0.965);">Standard Shapes Color</span><div style="left:147px;top:495.5px;width:13px;height:12.5px;background:#0080ff;border:1px solid #222;"></div><span class="t" style="left:164.8px;top:496px;font-size:11px;color:#000;transform:scaleX(0.965);">0080ff</span><div style="left:17px;top:510px;width:255px;height:17px;background:#fff;border-bottom:1px solid #e6e6e6;"></div><div style="left:144px;top:510px;width:1px;height:17px;background:#e2e2e2;"></div><span class="t" style="left:20.5px;top:513px;font-size:11px;color:#000;transform:scaleX(0.965);">Connector Shapes Color</span><div style="left:147px;top:512.5px;width:13px;height:12.5px;background:#00ff36;border:1px solid #222;"></div><span class="t" style="left:164.8px;top:513px;font-size:11px;color:#000;transform:scaleX(0.965);">00ff36</span><svg style="left:4.3px;top:531px" width="9" height="9" viewBox="0 0 9 9"><rect x=".5" y=".5" width="8" height="8" fill="#fff" stroke="#9a9a9a"/><path d="M2 4.500h5" stroke="#3a5fc0" stroke-width="1"/></svg><span class="t" style="left:20.9px;top:529.5px;font-size:12px;font-weight:bold;color:#8c8c8c;transform:scaleX(0.968);">Diagram Element</span><div style="left:17px;top:544px;width:255px;height:17px;background:#fff;border-bottom:1px solid #e6e6e6;"></div><div style="left:144px;top:544px;width:1px;height:17px;background:#e2e2e2;"></div><span class="t" style="left:20.5px;top:547px;font-size:11px;color:#000;transform:scaleX(0.965);">Document</span><div style="left:17px;top:561px;width:255px;height:17px;background:#fff;border-bottom:1px solid #e6e6e6;"></div><div style="left:144px;top:561px;width:1px;height:17px;background:#e2e2e2;"></div><span class="t" style="left:20.5px;top:564px;font-size:11px;color:#000;transform:scaleX(0.965);">Document Type</span><span class="t" style="left:148.5px;top:564px;font-size:11px;color:#000;transform:scaleX(0.965);">None</span><svg style="left:4.3px;top:582px" width="9" height="9" viewBox="0 0 9 9"><rect x=".5" y=".5" width="8" height="8" fill="#fff" stroke="#9a9a9a"/><path d="M2 4.500h5" stroke="#3a5fc0" stroke-width="1"/></svg><span class="t" style="left:20.9px;top:580.5px;font-size:12px;font-weight:bold;color:#8c8c8c;transform:scaleX(0.968);">Image Element</span><div style="left:17px;top:595px;width:255px;height:17px;background:#fff;border-bottom:1px solid #e6e6e6;"></div><div style="left:144px;top:595px;width:1px;height:17px;background:#e2e2e2;"></div><span class="t" style="left:20.5px;top:598px;font-size:11px;color:#000;transform:scaleX(0.965);">Image</span><div style="left:17px;top:612px;width:255px;height:17px;background:#fff;border-bottom:1px solid #e6e6e6;"></div><div style="left:144px;top:612px;width:1px;height:17px;background:#e2e2e2;"></div><span class="t" style="left:20.5px;top:615px;font-size:11px;color:#000;transform:scaleX(0.965);">Fixed</span><span class="t" style="left:148.5px;top:615px;font-size:11px;color:#000;transform:scaleX(0.965);">True</span><svg style="left:4.3px;top:633px" width="9" height="9" viewBox="0 0 9 9"><rect x=".5" y=".5" width="8" height="8" fill="#fff" stroke="#9a9a9a"/><path d="M2 4.500h5" stroke="#3a5fc0" stroke-width="1"/></svg><span class="t" style="left:20.9px;top:631.5px;font-size:12px;font-weight:bold;color:#8c8c8c;transform:scaleX(0.968);">Connector Element</span><div style="left:17px;top:646px;width:255px;height:17px;background:#fff;border-bottom:1px solid #e6e6e6;"></div><div style="left:144px;top:646px;width:1px;height:17px;background:#e2e2e2;"></div><span class="t" style="left:20.5px;top:649px;font-size:11px;color:#000;transform:scaleX(0.965);">Connector1</span><span class="t" style="left:148.5px;top:649px;font-size:11px;color:#000;transform:scaleX(0.965);">None</span><div style="left:17px;top:663px;width:255px;height:17px;background:#fff;border-bottom:1px solid #e6e6e6;"></div><div style="left:144px;top:663px;width:1px;height:17px;background:#e2e2e2;"></div><span class="t" style="left:20.5px;top:666px;font-size:11px;color:#000;transform:scaleX(0.965);">Connector2</span><span class="t" style="left:148.5px;top:666px;font-size:11px;color:#000;transform:scaleX(0.965);">None</span><div style="left:17px;top:680px;width:255px;height:17px;background:#fff;border-bottom:1px solid #e6e6e6;"></div><div style="left:144px;top:680px;width:1px;height:17px;background:#e2e2e2;"></div><span class="t" style="left:20.5px;top:683px;font-size:11px;color:#000;transform:scaleX(0.965);">Connector1 Handle</span><div style="left:17px;top:697px;width:255px;height:17px;background:#fff;border-bottom:1px solid #e6e6e6;"></div><div style="left:144px;top:697px;width:1px;height:17px;background:#e2e2e2;"></div><span class="t" style="left:20.5px;top:700px;font-size:11px;color:#000;transform:scaleX(0.965);">Connector2 Handle</span><div style="left:17px;top:714px;width:255px;height:17px;background:#fff;border-bottom:1px solid #e6e6e6;"></div><div style="left:144px;top:714px;width:1px;height:17px;background:#e2e2e2;"></div><span class="t" style="left:20.5px;top:717px;font-size:11px;color:#000;transform:scaleX(0.965);">Connector1 Text</span></div>
<div style="left:2543px;top:204.5px;width:16px;height:723px;background:#f0f0f0;"></div>
<div style="left:2551.3px;top:222px;width:2px;height:563px;background:#6e6e6e;"></div>
<div style="left:2272px;top:932.5px;width:286.5px;height:52px;background:#e9e9e9;border:1px solid #adadad;"></div>
<div style="left:0px;top:0px;width:2560px;height:24px;background:#fff;"></div>
<span class="t" style="left:1137.29px;top:6px;font-size:11px;transform:scaleX(1.0647);">UFM Dev - with JBB - UltraFluid Modeler</span>
<svg style="left:2420px;top:0" width="140" height="24" viewBox="0 0 140 24"><g stroke="#111" stroke-width="1" fill="none"><path d="M19.5 11.5h10"/><rect x="64.500" y="8.500" width="7" height="7" rx="1"/><path d="M66.5 8.500v-2h7.500v7.500h-2.500"/><path d="M110.500 6.500l9.500 9.500M120 6.500l-9.500 9.500"/></g></svg>
<div style="left:0px;top:24px;width:2560px;height:22px;background:#535353;"></div>
<div style="left:4.3px;top:2.2px;width:36.3px;height:36.3px;border-radius:18.200px;background:#fff;box-shadow:0 0 0 .8px rgba(150,150,150,.75),0 0 2px rgba(120,120,120,.5);"></div>
<div style="left:6px;top:3px;width:32.2px;height:34.3px;background:#fff;"></div>
<svg style="left:0;top:0" width="44" height="40" viewBox="0 0 44 40"><defs><linearGradient id="a1" x1="0" y1="0" x2="1" y2="1"><stop offset="0" stop-color="#fdf4ec"/><stop offset=".2" stop-color="#e59ac0"/><stop offset=".45" stop-color="#e4829a"/><stop offset=".6" stop-color="#e8787c"/><stop offset=".8" stop-color="#e8483c"/><stop offset="1" stop-color="#ee3030"/></linearGradient><linearGradient id="a2" x1="1" y1="0" x2="0" y2="1"><stop offset="0" stop-color="#cfe4c0"/><stop offset=".35" stop-color="#a4e084"/><stop offset="1" stop-color="#9cdc80"/></linearGradient><linearGradient id="a3" x1="0" y1="0" x2="1" y2="1"><stop offset="0" stop-color="#e6e27c"/><stop offset=".6" stop-color="#e2de70"/><stop offset=".62" stop-color="#e0e040"/><stop offset="1" stop-color="#dede38"/></linearGradient><linearGradient id="a4" x1="0" y1="0" x2="1" y2="1"><stop offset="0" stop-color="#a8c8f2"/><stop offset=".4" stop-color="#a0c8ee"/><stop offset=".45" stop-color="#58c0c0"/><stop offset="1" stop-color="#20c0c8"/></linearGradient></defs><rect x="20" y="20" width="17" height="14" fill="url(#a3)"/><rect x="26" y="12" width="7" height="13.500" fill="url(#a2)"/><rect x="12" y="22" width="17" height="10" fill="url(#a4)"/><rect x="16" y="22" width="13" height="3.200" fill="#bfe4c4"/><rect x="8" y="8" width="18" height="14" fill="url(#a1)"/><g fill="#000"><rect x="7" y="7" width="2" height="2"/><rect x="16" y="7" width="2" height="2"/><rect x="24" y="7" width="3" height="2"/><rect x="7" y="14" width="2" height="2"/><rect x="24" y="14" width="3" height="2"/><rect x="7" y="21" width="2" height="2"/><rect x="16" y="21" width="2" height="2"/><rect x="24" y="21" width="3" height="2"/><rect x="25" y="8" width="1.200" height="14"/><rect x="11" y="22" width="1.200" height="10"/><rect x="16" y="25" width="17" height="1"/></g></svg>
<svg style="left:52px;top:7px" width="8" height="9" viewBox="0 0 8 9"><path d="M1 1.500h5.500" stroke="#666" stroke-width="1"/><path d="M1 4h5.500L3.750 7.500z" fill="#555"/></svg>
<div style="left:48px;top:25px;width:54px;height:21px;border-radius:4px 4px 0 0;border:1px solid #d9f3f5;border-bottom:none;background:linear-gradient(#f4f6f8,#dfe3e8 60%,#d3d6dd);"></div>
<span class="t" style="left:59.8px;top:31px;font-size:11px;color:#111;transform:scaleX(1.0224);">Home</span>
<span class="t" style="left:117.79px;top:31px;font-size:11px;color:#fff;transform:scaleX(1.0334);">Format</span>
<span class="t" style="left:182.8px;top:31px;font-size:11px;color:#fff;transform:scaleX(1.0136);">Features</span>
<span class="t" style="left:257.28px;top:31px;font-size:11px;color:#fff;transform:scaleX(1.0815);">Options</span>
<span class="t" style="left:2509.81px;top:30px;font-size:11px;color:#fff;transform:scaleX(0.9405);">Style</span>
<svg style="left:2541px;top:32px" width="8" height="6" viewBox="0 0 8 6"><path d="M1 1.500l3 3 3-3" stroke="#fff" stroke-width="1" fill="none"/></svg>
<div style="left:1px;top:45px;width:2557px;height:90px;border-radius:4px;border:1px solid #c9ccd2;background:linear-gradient(#d6d9df 0,#cbced6 16px,#b2b7c1 17px,#c3c7ce 38px,#dadedf 62px,#e8efee 84px,#e9f0ef 100%);"></div>
<div style="left:0px;top:135px;width:2560px;height:3px;background:linear-gradient(#3f3f3f,#4a4a4a);"></div>
<div class="grp" style="left:4px;top:48px;width:60px;height:85px"></div>
<span class="t" style="left:9.29px;top:120px;font-size:11px;color:#fff;transform:scaleX(1.0726);">Clipboard</span>
<div class="grp" style="left:68px;top:48px;width:61px;height:85px"></div>
<span class="t" style="left:72.28px;top:120px;font-size:11px;color:#fff;transform:scaleX(1.0868);">Operation</span>
<div class="grph" style="left:133px;top:48px;width:332px;height:85px"></div>
<span class="t" style="left:281.4px;top:120px;font-size:11px;color:#fff;transform:scaleX(1.0222);">Design</span>
<div class="grp" style="left:469px;top:48px;width:89px;height:85px"></div>
<span class="t" style="left:484.39px;top:120px;font-size:11px;color:#fff;transform:scaleX(1.0311);">Connectors</span>
<div class="grp" style="left:561px;top:48px;width:69px;height:85px"></div>
<span class="t" style="left:572.29px;top:120px;font-size:11px;color:#fff;transform:scaleX(1.0511);">Planning</span>
<div class="grp" style="left:634px;top:48px;width:164px;height:85px"></div>
<span class="t" style="left:682.19px;top:120px;font-size:11px;color:#fff;transform:scaleX(1.0430);">Development</span>
<div class="grp" style="left:802px;top:48px;width:262px;height:85px"></div>
<span class="t" style="left:921.29px;top:120px;font-size:11px;color:#fff;transform:scaleX(1.0449);">Font</span>
<div class="grp" style="left:1067px;top:48px;width:145px;height:85px"></div>
<span class="t" style="left:1096.4px;top:120px;font-size:11px;color:#fff;transform:scaleX(1.0184);">Format and Style</span>
<div class="grp" style="left:1215px;top:48px;width:110px;height:85px"></div>
<span class="t" style="left:1255.8px;top:120px;font-size:11px;color:#fff;transform:scaleX(1.0171);">Zoom</span>
<div class="grp" style="left:1328px;top:48px;width:200px;height:85px"></div>
<span class="t" style="left:1407.29px;top:120px;font-size:11px;color:#fff;transform:scaleX(1.0477);">Position</span>
<svg style="left:10px;top:53px" width="18" height="15" viewBox="0 0 18 15"><path d="M1.500 1.500h5l2 2v6.500h-7z" fill="#e6edf8" stroke="#56709c" stroke-width="1"/><path d="M3 4.500h3M3 6.500h4" stroke="#5b8be0" stroke-width="1"/><path d="M7.500 4.500h6l2.500 2.500v7h-8.500z" fill="#eaf1fc" stroke="#2c58a8" stroke-width="1"/><path d="M13.500 4.500v2.500h2.500" fill="none" stroke="#2c58a8" stroke-width=".8"/><path d="M9 8.500h4M9 10.500h5.500M9 12.500h5.500" stroke="#3f72d8" stroke-width="1"/></svg>
<span class="t" style="left:30.1px;top:56px;font-size:11px;">Copy</span>
<svg style="left:12px;top:75px" width="14" height="16" viewBox="0 0 14 16"><path d="M4.300 1.500L8 9.500M9.800 1.500L6 9.500" stroke="#56606e" stroke-width="1.500" fill="none" stroke-linecap="round"/><ellipse cx="4" cy="12" rx="2" ry="2.300" fill="#f4f6fb" stroke="#2f5cc8" stroke-width="1.500" transform="rotate(-20 4 12)"/><ellipse cx="9.500" cy="11.500" rx="2" ry="2.300" fill="#f4f6fb" stroke="#2a50b0" stroke-width="1.500" transform="rotate(20 9.500 11.500)"/></svg>
<span class="t" style="left:30.1px;top:78px;font-size:11px;transform:scaleX(1.0223);">Cut</span>
<svg style="left:10px;top:97px" width="18" height="16" viewBox="0 0 18 16"><defs><linearGradient id="pst" x1="0" y1="0" x2="1" y2="1"><stop offset="0" stop-color="#f6e6a8"/><stop offset="1" stop-color="#d4b25c"/></linearGradient></defs><rect x="1.500" y="2.500" width="11" height="11" rx="1" fill="url(#pst)" stroke="#c0a45c"/><rect x="4.500" y="1" width="5" height="3" rx=".8" fill="#e8d8a0" stroke="#b8a060" stroke-width=".8"/><path d="M7.500 7.500h6.500l2.500 2.500v4.500h-9z" fill="#e4e9f1" stroke="#8f98a6"/><path d="M9 10.500h4M9 12.500h6" stroke="#a9b4c6" stroke-width="1"/></svg>
<span class="t" style="left:30.11px;top:100px;font-size:11px;color:#8d8a96;transform:scaleX(0.9421);">Paste</span>
<svg style="left:80px;top:54px" width="33" height="30" viewBox="0 0 33 30"><path d="M2.500 3C3 .5 7 .3 10 2.500 17 8 24 17 29.800 26.200 29 27.200 28 27 27 26 21 19 13 10.500 5 6.500 3 5.500 2.200 4.500 2.500 3Z" fill="#2f2f2f"/><path d="M31 3C25 5.500 15.500 12.500 10 21.500 8.200 24.500 6 27.500 3.200 27 1 26.500 1 24 3 21.500 10 13 21 5.500 30.500 2.500Z" fill="#2f2f2f"/></svg>
<span class="t" style="left:80.3px;top:90px;font-size:11px;transform:scaleX(1.0064);">Delete</span>
<div style="left:136px;top:50px;width:56px;height:22px;border:1px solid #c29b4a;border-radius:3px;background:linear-gradient(#fbd9a0 0,#f9c376 8px,#f6a93c 9px,#fcd06e 17px,#fde79e 21px);"></div>
<svg style="left:142px;top:52px" width="12" height="18" viewBox="0 0 12 18"><path d="M2 1l8 8.500H6.200l2.300 5-1.800 1-2.400-5.200L2 12.500z" fill="#fff" stroke="#e8d9b8" stroke-width=".8"/></svg>
<span class="t" style="left:157.81px;top:56px;font-size:11px;transform:scaleX(0.9649);">Select</span>
<svg style="left:142px;top:74px" width="12" height="18" viewBox="0 0 12 18"><path d="M2 1l8 8.500H6.200l2.300 5-1.800 1-2.400-5.200L2 12.500z" fill="#f6f9ff" stroke="#c3d3f0" stroke-width=".9"/></svg>
<span class="t" style="left:157.79px;top:78px;font-size:11px;transform:scaleX(1.0386);">Selection</span>
<svg style="left:209px;top:80.5px" width="7" height="4" viewBox="0 0 7 4"><path d="M0.500 0.500h6L3.500 3.800z" fill="#5a5a5a"/></svg>
<div style="left:139px;top:97px;width:16px;height:16px;border:1px solid #c8c8c8;background:#f4f4f4;"></div>
<span class="t" style="left:157.8px;top:100px;font-size:11px;transform:scaleX(1.0167);">Select All</span>
<svg style="left:223px;top:53px" width="30" height="30" viewBox="0 0 30 30"><defs><linearGradient id="pg" x1="0" y1="0" x2="0" y2="1"><stop offset="0" stop-color="#9ccbf3"/><stop offset="1" stop-color="#e4f1fc"/></linearGradient></defs><rect x=".5" y=".5" width="29" height="29" fill="#f4f9fd" stroke="#8ea6c6"/><rect x="3.500" y="3.500" width="23" height="20" fill="url(#pg)" stroke="#8aa9d3"/><circle cx="19.500" cy="9.500" r="3.200" fill="#fde8d0" stroke="#f4a27c"/><path d="M4 23l7-8 5 6 4-4.500 6 6.500z" fill="#7f9fd8"/><path d="M8 18.500l3-3.500 2.500 3z" fill="#eef3fb"/></svg>
<span class="t" style="left:221.3px;top:90px;font-size:11px;transform:scaleX(1.0077);">Picture</span>
<svg style="left:264px;top:53px" width="32" height="32" viewBox="0 0 32 32"><defs><linearGradient id="sg" x1="0" y1="0" x2="1" y2="0"><stop offset="0" stop-color="#a9c6ee"/><stop offset=".45" stop-color="#f4f8fe"/><stop offset="1" stop-color="#9dbbe6"/></linearGradient></defs><circle cx="21" cy="12" r="9.500" fill="#c8dcf6" stroke="#8fa9cf"/><rect x="1.500" y="4.500" width="16" height="16" fill="#d5e4f8" stroke="#8fa9cf"/><path d="M7 12v14c0 3 15 3 15 0V12z" fill="url(#sg)" stroke="#8fa9cf"/><ellipse cx="14.500" cy="12" rx="7.500" ry="2.600" fill="#eaf2fd" stroke="#8fa9cf"/></svg>
<span class="t" style="left:262.31px;top:90px;font-size:11px;transform:scaleX(0.9649);">Shapes</span>
<svg style="left:277px;top:105.5px" width="7" height="4" viewBox="0 0 7 4"><path d="M0.500 0.500h6L3.500 3.800z" fill="#5a5a5a"/></svg>
<svg style="left:313px;top:56px" width="31" height="26" viewBox="0 0 31 26"><rect x=".5" y=".5" width="29" height="24" fill="#fbfcfe" stroke="#8ea0bd"/><text x="3" y="14.500" font-family="Liberation Serif,serif" font-size="15" fill="#111">A</text><path d="M16 4.500h11M16 6.500h11M16 8.500h11M16 10.500h11M16 12.500h11M16 14.500h11M3 17.500h24M3 19.500h24M3 21.500h24" stroke="#9db4dc" stroke-width="1"/></svg>
<span class="t" style="left:305.3px;top:90px;font-size:11px;transform:scaleX(0.9856);">Draw Text</span>
<span class="t" style="left:315.4px;top:103px;font-size:11px;transform:scaleX(0.9760);">Box</span>
<svg style="left:336px;top:105.5px" width="7" height="4" viewBox="0 0 7 4"><path d="M0.500 0.500h6L3.500 3.800z" fill="#5a5a5a"/></svg>
<div style="left:357px;top:50px;width:105px;height:22px;border:1px solid #cdb164;border-radius:3px;background:linear-gradient(#fdf3cc 0,#fdeaa8 9px,#fbcf4c 10px,#fcd760 16px,#fdeb9c 21px);"></div>
<svg style="left:362px;top:52px" width="14" height="18" viewBox="0 0 14 18"><defs><linearGradient id="ig" x1="0" y1="0" x2="1" y2="0"><stop offset="0" stop-color="#3c76d8"/><stop offset=".5" stop-color="#b8a878"/><stop offset="1" stop-color="#5a6690"/></linearGradient></defs><path d="M2 4l6-3 4 1.500v11L6 17l-4-2z" fill="url(#ig)"/><path d="M2 4l6-3 4 1.500-6 2.800z" fill="#9cc0f4"/></svg>
<span class="t" style="left:379.19px;top:56px;font-size:11px;transform:scaleX(1.0694);">Infrastructure</span>
<svg style="left:453px;top:58px" width="7" height="4" viewBox="0 0 7 4"><path d="M0.500 0.500h6L3.500 3.800z" fill="#5a5a5a"/></svg>
<svg style="left:360px;top:76px" width="15" height="15" viewBox="0 0 15 15"><path d="M3.500 4l9 .5M3.500 4l0 8M3.500 4l8 8" stroke="#9aa" stroke-width=".8"/><path d="M3.500 1l3 3-3 3-3-3z" fill="#3fd04a"/><path d="M11 3l3-2v5zM1 11l3 0-1.500 3zM11 11l3-.5v3.500h-3z" fill="#2f6a3a"/></svg>
<span class="t" style="left:379.19px;top:78px;font-size:11px;transform:scaleX(1.0461);">Development</span>
<svg style="left:451px;top:80.5px" width="7" height="4" viewBox="0 0 7 4"><path d="M0.500 0.500h6L3.500 3.800z" fill="#5a5a5a"/></svg>
<svg style="left:360px;top:96px" width="14" height="18" viewBox="0 0 14 18"><path d="M1.500 1.500h8l3 3v12h-11z" fill="#fdfdfd" stroke="#777"/><path d="M9.500 1.500v3h3" fill="none" stroke="#777"/><path d="M3.500 11h6V6.500" fill="none" stroke="#2a55b0" stroke-width="1.300"/><path d="M5.500 9L3 11l2.500 2zM7.500 8l2-2.500L11.500 8z" fill="#2a55b0"/></svg>
<span class="t" style="left:379.2px;top:100px;font-size:11px;transform:scaleX(1.0104);">Diagram</span>
<div style="left:474px;top:50px;width:54px;height:22px;border:1px solid #8f9093;background:#ebebeb;box-shadow:inset 0 0 0 1px #fbfbfb;"></div>
<span class="t" style="left:476.3px;top:56px;font-size:11px;transform:scaleX(0.9902);">Elemer</span>
<svg style="left:517px;top:58px" width="7" height="4" viewBox="0 0 7 4"><path d="M0.500 0.500h6L3.500 3.800z" fill="#5a5a5a"/></svg>
<svg style="left:475px;top:74px" width="18" height="18" viewBox="0 0 18 18"><path d="M3.500 14V9.500h11V6" fill="none" stroke="#333" stroke-width="1.200"/><rect x="1.500" y="12.500" width="4" height="4" fill="#fff" stroke="#2c5c9c" stroke-width="1.200"/><rect x="12.500" y="1.500" width="4" height="4" fill="#fff" stroke="#2c5c9c" stroke-width="1.200"/></svg>
<span class="t" style="left:495.29px;top:78px;font-size:11px;transform:scaleX(1.0373);">Connect</span>
<svg style="left:475px;top:96px" width="18" height="18" viewBox="0 0 18 18"><path d="M9.500 9V6a3.300 3.300 0 0 1 6.600 0v3" fill="none" stroke="#8a8a8a" stroke-width="1.500"/><rect x="1.500" y="8.500" width="10" height="7.500" rx="1" fill="#858585"/><rect x="5.500" y="10.500" width="2" height="4" fill="#eee"/></svg>
<span class="t" style="left:495.29px;top:100px;font-size:11px;color:#9a9ca6;transform:scaleX(1.0363);">Deconnect</span>
<div style="left:570px;top:57px;width:13px;height:9px;background:#d4d3c0;opacity:.85;"></div>
<span class="t" style="left:587.02px;top:56px;font-size:11px;transform:scaleX(0.9108);">Task</span>
<div style="left:569px;top:79px;width:14px;height:8px;background:#c5c9dc;border:1px solid #b9bdd6;"></div>
<span class="t" style="left:586.98px;top:78px;font-size:11px;transform:scaleX(1.1219);">Month</span>
<svg style="left:568px;top:98px" width="14" height="14" viewBox="0 0 14 14"><text x="0" y="9" font-family="Liberation Serif,serif" font-weight="bold" font-size="11" fill="#888">T</text><text x="4" y="13" font-family="Liberation Serif,serif" font-weight="bold" font-size="13" fill="#000">T</text></svg>
<span class="t" style="left:587.02px;top:100px;font-size:11px;transform:scaleX(0.9170);">Text</span>
<div style="left:641px;top:57px;width:14px;height:8px;background:#b5bad4;border:1px solid #a8aecd;"></div>
<span class="t" style="left:659.42px;top:56px;font-size:11px;transform:scaleX(0.9089);">Class</span>
<div style="left:640px;top:79px;width:14px;height:8px;background:#c4cccb;"></div>
<span class="t" style="left:659.39px;top:78px;font-size:11px;transform:scaleX(1.0327);">Interface</span>
<div style="left:640px;top:101px;width:15px;height:8px;background:#a99c62;border-left:1px solid #5c5330;"></div>
<div style="left:643px;top:103px;width:2px;height:1px;background:#333;"></div>
<div style="left:647px;top:103px;width:2px;height:1px;background:#333;"></div>
<div style="left:712px;top:57px;width:14px;height:8px;background:#d9d8d2;opacity:.7;"></div>
<div style="left:712px;top:61px;width:14px;height:1px;background:#b5805c;"></div>
<div style="left:716px;top:59px;width:1px;height:1px;background:#333;"></div>
<div style="left:719px;top:59px;width:1px;height:1px;background:#333;"></div>
<span class="t" style="left:659.41px;top:100px;font-size:11px;transform:scaleX(0.9744);">Enum</span>
<span class="t" style="left:730.31px;top:56px;font-size:11px;transform:scaleX(0.9671);">Package</span>
<div style="left:713px;top:79px;width:13px;height:9px;background:#d7d7c8;border:1px solid #d0d0c6;"></div>
<span class="t" style="left:730.3px;top:78px;font-size:11px;transform:scaleX(1.0109);">Comment</span>
<div style="left:712px;top:101px;width:14px;height:4px;background:#a5c3e6;"></div>
<div style="left:714px;top:103px;width:3px;height:1px;background:#345;"></div>
<div style="left:720px;top:103px;width:2px;height:1px;background:#345;"></div>
<span class="t" style="left:730.29px;top:100px;font-size:11px;transform:scaleX(1.0586);">Component</span>
<div style="left:807px;top:58px;width:123px;height:22px;border:1px solid #8f9093;background:#ebebeb;box-shadow:inset 0 0 0 1px #f9f9f9;"></div>
<span class="t" style="left:810.49px;top:64px;font-size:11px;transform:scaleX(1.0361);">Calibri</span>
<svg style="left:919px;top:66.5px" width="7" height="4" viewBox="0 0 7 4"><path d="M0.500 0.500h6L3.500 3.800z" fill="#5a5a5a"/></svg>
<div style="left:931px;top:58px;width:54px;height:22px;border:1px solid #8f9093;background:#ebebeb;box-shadow:inset 0 0 0 1px #f9f9f9;"></div>
<span class="t" style="left:933.3px;top:64px;font-size:11px;transform:scaleX(0.9808);">24</span>
<svg style="left:974px;top:66.5px" width="7" height="4" viewBox="0 0 7 4"><path d="M0.500 0.500h6L3.500 3.800z" fill="#5a5a5a"/></svg>
<div style="left:989px;top:59px;width:44px;height:21px;border:1px solid #b9c0c6;border-radius:3px;background:linear-gradient(#dfe3e7 0,#d6dade 9px,#c9ced3 10px,#dce2e3 20px);box-shadow:0 0 0 1px rgba(255,255,255,.35);"></div>
<div style="left:1010.5px;top:60px;width:1px;height:19px;background:#bcc3c8;"></div>
<span class="t" style="left:992.8px;top:63px;font-size:15px;font-weight:bold;font-family:'Liberation Serif',serif;transform:scaleX(1.0155);">A</span>
<span class="t" style="left:1015.81px;top:66px;font-size:11px;font-weight:bold;font-family:'Liberation Serif',serif;transform:scaleX(0.9441);">A</span>
<svg style="left:1002px;top:61px" width="6" height="4" viewBox="0 0 6 4"><path d="M0 3.500L3 .5l3 3z" fill="#2f62c4"/></svg>
<svg style="left:1023px;top:62px" width="6" height="4" viewBox="0 0 6 4"><path d="M0 .5h6L3 3.500z" fill="#2f62c4"/></svg>
<div style="left:1037px;top:59px;width:23px;height:21px;border:1px solid #b9c0c6;border-radius:3px;background:linear-gradient(#dfe3e7 0,#d6dade 9px,#c9ced3 10px,#dce2e3 20px);box-shadow:0 0 0 1px rgba(255,255,255,.35);"></div>
<svg style="left:1039px;top:60px" width="19" height="19" viewBox="0 0 19 19"><rect x="2" y="2" width="11" height="7" fill="#fff" stroke="#6a8ccc" stroke-width=".8"/><text x="3.500" y="8" font-size="6.500" font-family="Liberation Sans,sans-serif" fill="#222">Aa</text><path d="M7 13l7-5 3 3-7 5z" fill="#f4f7fc" stroke="#8ea4cc" stroke-width=".9"/></svg>
<div style="left:806px;top:88px;width:166px;height:21px;border:1px solid #b9c0c6;border-radius:3px;background:linear-gradient(#dfe3e7 0,#d6dade 9px,#c9ced3 10px,#dce2e3 20px);box-shadow:0 0 0 1px rgba(255,255,255,.35);"></div>
<div style="left:829px;top:89px;width:1px;height:19px;background:#c0c6cb;"></div>
<div style="left:852.5px;top:89px;width:1px;height:19px;background:#c0c6cb;"></div>
<div style="left:876.5px;top:89px;width:1px;height:19px;background:#c0c6cb;"></div>
<div style="left:900.5px;top:89px;width:1px;height:19px;background:#c0c6cb;"></div>
<div style="left:924.5px;top:89px;width:1px;height:19px;background:#c0c6cb;"></div>
<div style="left:948.5px;top:89px;width:1px;height:19px;background:#c0c6cb;"></div>
<span class="t" style="left:812.78px;top:91px;font-size:13px;font-weight:bold;font-family:'Liberation Serif',serif;transform:scaleX(1.0956);">B</span>
<span class="t" style="left:836.22px;top:91px;font-size:13px;font-weight:bold;font-style:italic;font-family:'Liberation Serif',serif;transform:scaleX(1.3837);">I</span>
<span class="t" style="left:859.76px;top:93px;font-size:11px;font-weight:bold;font-family:'Liberation Serif',serif;transform:scaleX(1.1959);text-decoration:underline;">U</span>
<span class="t" style="left:880.81px;top:93px;font-size:11px;font-weight:bold;font-family:'Liberation Serif',serif;transform:scaleX(0.9697);text-decoration:line-through;">abc</span>
<span class="t" style="left:906.78px;top:92px;font-size:13px;color:#868686;font-weight:bold;transform:scaleX(1.1065);">x</span>
<span class="t" style="left:915.29px;top:99px;font-size:6px;color:#5b84d8;transform:scaleX(1.0489);">2</span>
<span class="t" style="left:930.78px;top:92px;font-size:13px;color:#868686;font-weight:bold;transform:scaleX(1.1065);">x</span>
<span class="t" style="left:939.29px;top:92px;font-size:6px;color:#5b84d8;transform:scaleX(1.0489);">2</span>
<span class="t" style="left:953.3px;top:91px;font-size:13px;font-weight:bold;font-family:'Liberation Serif',serif;transform:scaleX(1.0070);">Aa</span>
<div style="left:976px;top:88px;width:66px;height:21px;border:1px solid #b9c0c6;border-radius:3px;background:linear-gradient(#dfe3e7 0,#d6dade 9px,#c9ced3 10px,#dce2e3 20px);box-shadow:0 0 0 1px rgba(255,255,255,.35);"></div>
<div style="left:1008.5px;top:89px;width:1px;height:19px;background:#c0c6cb;"></div>
<div style="left:979px;top:91px;width:10px;height:9px;background:#ffff40;"></div>
<span class="t" style="left:979.32px;top:90px;font-size:10px;transform:scaleX(0.8990);">ab</span>
<svg style="left:984px;top:90px" width="12" height="13" viewBox="0 0 12 13"><path d="M2 11l6-9 3 2-6 9z" fill="#e9f0fb" stroke="#7e98c8" stroke-width=".8"/><path d="M2 11l3 2-3.500.5z" fill="#e8d9a0"/></svg>
<div style="left:979px;top:102px;width:16px;height:4px;background:#ffff00;"></div>
<svg style="left:999px;top:95.5px" width="7" height="4" viewBox="0 0 7 4"><path d="M0.500 0.500h6L3.500 3.800z" fill="#5a5a5a"/></svg>
<span class="t" style="left:1014.79px;top:88px;font-size:15px;color:#3355b4;font-weight:bold;font-family:'Liberation Serif',serif;transform:scaleX(1.0616);">A</span>
<div style="left:1012px;top:102px;width:16px;height:4px;background:#000;"></div>
<svg style="left:1032px;top:95.5px" width="7" height="4" viewBox="0 0 7 4"><path d="M0.500 0.500h6L3.500 3.800z" fill="#5a5a5a"/></svg>
<svg style="left:1074px;top:51px" width="17" height="15" viewBox="0 0 17 15"><path d="M3 8.500l6-6 6 5-6 6z" fill="#eef3fb" stroke="#35589c" stroke-width="1"/><path d="M8 1.500v5" stroke="#556" stroke-width="1.300"/><path d="M13 6c2 1 3 3 2.500 6-1.500-1-2-3-2.500-6z" fill="#2f67c9"/></svg>
<div style="left:1074px;top:65px;width:16px;height:4px;background:#ffff00;"></div>
<span class="t" style="left:1093.39px;top:56px;font-size:11px;transform:scaleX(1.0416);">Fill Color</span>
<svg style="left:1143px;top:58px" width="7" height="4" viewBox="0 0 7 4"><path d="M0.500 0.500h6L3.500 3.800z" fill="#5a5a5a"/></svg>
<svg style="left:1074px;top:74px" width="17" height="14" viewBox="0 0 17 14"><path d="M6 2.500H1v8h5" fill="none" stroke="#333" stroke-width="1"/><path d="M6 10l7-8 2 1.800-7 8-2.800.800z" fill="#e8c96a" stroke="#9a7a30" stroke-width=".7"/><path d="M13 2l1-1 2 1.800-1 1z" fill="#d8604a"/></svg>
<div style="left:1074px;top:87px;width:16px;height:4px;background:#000;"></div>
<span class="t" style="left:1093.39px;top:78px;font-size:11px;transform:scaleX(1.0251);">Line Color</span>
<svg style="left:1149px;top:80px" width="7" height="4" viewBox="0 0 7 4"><path d="M0.500 0.500h6L3.500 3.800z" fill="#5a5a5a"/></svg>
<div style="left:1074px;top:100px;width:15px;height:1.5px;background:#3559a8;"></div>
<div style="left:1074px;top:104px;width:15px;height:2px;background:#3559a8;"></div>
<div style="left:1074px;top:108px;width:15px;height:3px;background:#3559a8;"></div>
<span class="t" style="left:1093.39px;top:100px;font-size:11px;transform:scaleX(1.0583);">Line Width</span>
<svg style="left:1153px;top:102px" width="7" height="4" viewBox="0 0 7 4"><path d="M0.500 0.500h6L3.500 3.800z" fill="#5a5a5a"/></svg>
<svg style="left:1166px;top:54px" width="24" height="31" viewBox="0 0 24 31"><defs><linearGradient id="pcg" x1="0" y1="0" x2="0" y2="1"><stop offset="0" stop-color="#cfe6fb"/><stop offset="1" stop-color="#9ccdf6"/></linearGradient></defs><path d="M1.500 1.500h14l6.500 6.500v20.500h-20.500z" fill="url(#pcg)" stroke="#eaf4fd"/><path d="M15.500 1.500v6.500h6.500z" fill="#f4f9fe" stroke="#c5dcf2" stroke-width=".7"/><path d="M4 15l7-7 7 6-7 7z" fill="#f2f2f2" stroke="#888" stroke-width=".9"/><path d="M10 5.500v7" stroke="#666" stroke-width="1.200"/><path d="M17 12.500c2.500 1 3 4 2.500 7-1.500-1.500-2.500-3.500-2.500-7z" fill="#3a78d6"/></svg>
<span class="t" style="left:1170.51px;top:90px;font-size:11px;transform:scaleX(0.9342);">Page</span>
<span class="t" style="left:1164.09px;top:103px;font-size:11px;transform:scaleX(1.0538);">Color</span>
<svg style="left:1194px;top:105.5px" width="7" height="4" viewBox="0 0 7 4"><path d="M0.500 0.500h6L3.500 3.800z" fill="#5a5a5a"/></svg>
<div style="left:1206px;top:56px;width:1px;height:55px;background:#aeb3bb;"></div>
<span class="t" style="left:1221.69px;top:56px;font-size:11px;transform:scaleX(1.0409);">Zoom In</span>
<span class="t" style="left:1221.69px;top:78px;font-size:11px;transform:scaleX(1.0592);">Zoom Out</span>
<span class="t" style="left:1220.8px;top:100px;font-size:11px;">Zoom:</span>
<div style="left:1256px;top:94px;width:65px;height:22px;border:1px solid #8f9093;background:#ebebeb;box-shadow:inset 0 0 0 1px #f9f9f9;"></div>
<span class="t" style="left:1258.21px;top:100px;font-size:11px;transform:scaleX(0.9357);">75%</span>
<svg style="left:1310px;top:102.5px" width="7" height="4" viewBox="0 0 7 4"><path d="M0.500 0.500h6L3.500 3.800z" fill="#5a5a5a"/></svg>
<div style="left:1339px;top:53px;width:14px;height:14px;border:1px solid #9aa0a8;background:linear-gradient(#eceeef,#dcdfe1 49%,#c9cdd0 50%,#e3e5e6);box-shadow:1px 1px 1px rgba(40,50,70,.6);"></div>
<div style="left:1355px;top:70px;width:14px;height:14px;border:1px solid #9aa0a8;background:linear-gradient(#eceeef,#dcdfe1 49%,#c9cdd0 50%,#e3e5e6);box-shadow:1px 1px 1px rgba(40,50,70,.6);"></div>
<div style="left:1344px;top:58px;width:19px;height:19px;border:1px solid #c9a646;background:linear-gradient(#fdf3a8,#fbe78a 49%,#f3d970 50%,#fbe992);box-shadow:1px 1px 1px rgba(40,50,70,.55);"></div>
<div style="left:1402px;top:68px;width:14px;height:14px;border:1px solid #9aa0a8;background:linear-gradient(#eceeef,#dcdfe1 49%,#c9cdd0 50%,#e3e5e6);box-shadow:1px 1px 1px rgba(40,50,70,.6);"></div>
<div style="left:1390px;top:56px;width:19px;height:19px;border:1px solid #c9a646;background:linear-gradient(#fdf3a8,#fbe78a 49%,#f3d970 50%,#fbe992);box-shadow:1px 1px 1px rgba(40,50,70,.55);"></div>
<div style="left:1440px;top:57px;width:19px;height:19px;border:1px solid #c9a646;background:linear-gradient(#fdf3a8,#fbe78a 49%,#f3d970 50%,#fbe992);box-shadow:1px 1px 1px rgba(40,50,70,.55);"></div>
<div style="left:1452px;top:69px;width:14px;height:14px;border:1px solid #9aa0a8;background:linear-gradient(#eceeef,#dcdfe1 49%,#c9cdd0 50%,#e3e5e6);box-shadow:1px 1px 1px rgba(40,50,70,.6);"></div>
<div style="left:1486px;top:55px;width:14px;height:14px;border:1px solid #9aa0a8;background:linear-gradient(#eceeef,#dcdfe1 49%,#c9cdd0 50%,#e3e5e6);box-shadow:1px 1px 1px rgba(40,50,70,.6);"></div>
<div style="left:1491.5px;top:60px;width:19px;height:19px;border:1px solid #c9a646;background:linear-gradient(#fdf3a8,#fbe78a 49%,#f3d970 50%,#fbe992);box-shadow:1px 1px 1px rgba(40,50,70,.55);"></div>
<div style="left:1502.5px;top:71px;width:14px;height:14px;border:1px solid #9aa0a8;background:linear-gradient(#eceeef,#dcdfe1 49%,#c9cdd0 50%,#e3e5e6);box-shadow:1px 1px 1px rgba(40,50,70,.6);"></div>
<span class="t" style="left:1341.3px;top:90px;font-size:11px;transform:scaleX(1.0112);">Move</span>
<span class="t" style="left:1333.88px;top:103px;font-size:11px;transform:scaleX(1.1081);">to Front</span>
<span class="t" style="left:1388.4px;top:90px;font-size:11px;transform:scaleX(1.0112);">Move</span>
<span class="t" style="left:1381.49px;top:103px;font-size:11px;transform:scaleX(1.0336);">Forward</span>
<span class="t" style="left:1439.3px;top:90px;font-size:11px;transform:scaleX(1.0112);">Move</span>
<span class="t" style="left:1428.5px;top:103px;font-size:11px;transform:scaleX(1.0063);">Backward</span>
<span class="t" style="left:1488.3px;top:90px;font-size:11px;transform:scaleX(1.0112);">Move</span>
<span class="t" style="left:1482.69px;top:103px;font-size:11px;transform:scaleX(1.0440);">to Back</span>
</body></html>
